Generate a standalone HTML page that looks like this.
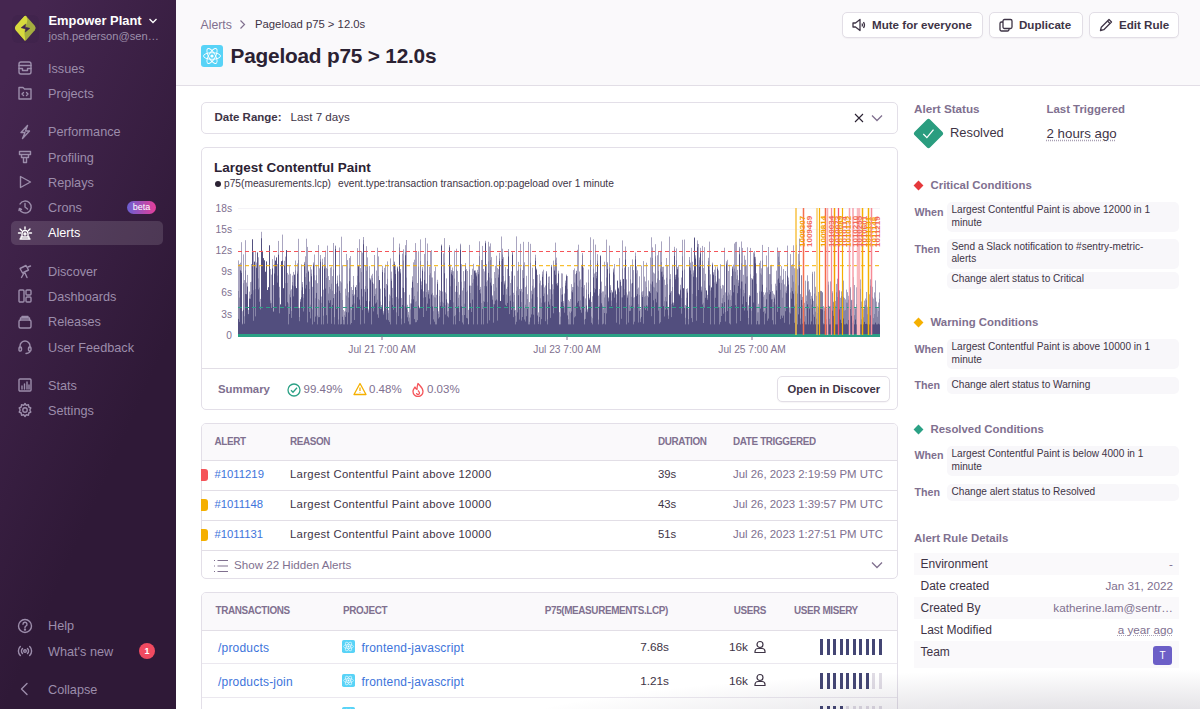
<!DOCTYPE html>
<html><head><meta charset="utf-8"><style>
html,body{margin:0;padding:0}
body{width:1200px;height:709px;overflow:hidden;position:relative;background:#fff;font-family:'Liberation Sans', sans-serif}
.abs{position:absolute}
.t{position:absolute;white-space:nowrap}
#sb{position:absolute;left:0;top:0;width:176px;height:709px;background:linear-gradient(294deg,#2f1937 35%,#452650 92%)}
.card{border:1px solid #e3dfe8;border-radius:5px;background:#fff}
.btn{box-sizing:border-box;border:1px solid #e2dee6;border-radius:5px;background:#fff;box-shadow:0 1px 1px rgba(43,34,51,0.04)}
</style></head><body>
<div id="sb"></div>
<svg class="abs" style="left:10px;top:12px" width="32" height="32" viewBox="10 12 32 32">
<rect x="12" y="15" width="27" height="28" rx="6" fill="#2c1836" opacity="0.12"/>
<path d="M24.3 16.2 Q25.3 15.2 26.3 16.2 L34.8 25.8 Q36.6 28 34.8 30.2 L26.3 39.9 Q25.3 41 24.3 39.9 L15.8 30.2 Q14 28 15.8 25.8 Z" fill="#a4ad3f"/>
<path d="M24.3 16.2 Q25.3 15.2 26.3 16.2 Q27.6 18.5 27.2 21 Q26.6 24 25.5 26 L24.5 31 Q24.3 34 24.9 37 L25.3 41 Q24.8 40.6 24.3 39.9 L15.8 30.2 Q14 28 15.8 25.8 Z" fill="#d8da3e"/>
<path d="M21.2 27.7 L25.6 24.2 L25.1 27.2 L29.8 28.3 L25.3 32 L25.8 28.9 Z" fill="#3f2550" stroke="#3f2550" stroke-width="0.6" stroke-linejoin="round"/>
</svg>
<div class="t" style="left:48.5px;top:15.08px;font-size:12.9px;line-height:12.9px;color:#ffffff;font-weight:700;">Empower Plant</div>
<svg class="abs" style="left:147px;top:16px" width="12" height="9" viewBox="0 0 12 9"><path d="M2.5 3 L6 6.5 L9.5 3" stroke="#fff" stroke-width="1.3" fill="none"/></svg>
<div class="t" style="left:48.5px;top:30.56px;font-size:11.15px;line-height:11.15px;color:#9d90ab;font-weight:400;">josh.pederson@sen…</div>
<div class="abs" style="left:10.5px;top:221px;width:152px;height:24px;border-radius:5px;background:rgba(255,255,255,0.13)"></div>
<svg class="abs" style="left:17px;top:60px" width="16" height="16" viewBox="0 0 16 16" fill="none" stroke="#9c8dab" stroke-width="1.4" stroke-linecap="round" stroke-linejoin="round"><rect x="2" y="2" width="12" height="12" rx="2"/><path d="M2 5.5h12M2 8.5h3.5v2h5v-2H14"/></svg>
<div class="t" style="left:48px;top:62.75px;font-size:12.7px;line-height:12.7px;color:#9c8dab;font-weight:400;">Issues</div>
<svg class="abs" style="left:17px;top:85px" width="16" height="16" viewBox="0 0 16 16" fill="none" stroke="#9c8dab" stroke-width="1.4" stroke-linecap="round" stroke-linejoin="round"><path d="M2 2.5h4l1.5 1.5H14v10H2z"/><path d="M6.5 7.5 5 9l1.5 1.5M9.5 7.5 11 9l-1.5 1.5"/></svg>
<div class="t" style="left:48px;top:87.75px;font-size:12.7px;line-height:12.7px;color:#9c8dab;font-weight:400;">Projects</div>
<svg class="abs" style="left:17px;top:123.5px" width="16" height="16" viewBox="0 0 16 16" fill="none" stroke="#9c8dab" stroke-width="1.4" stroke-linecap="round" stroke-linejoin="round"><path d="M10.5 1.5 4 8.5h4l-2.5 6 7-7.5H8.5z"/></svg>
<div class="t" style="left:48px;top:126.25px;font-size:12.7px;line-height:12.7px;color:#9c8dab;font-weight:400;">Performance</div>
<svg class="abs" style="left:17px;top:149px" width="16" height="16" viewBox="0 0 16 16" fill="none" stroke="#9c8dab" stroke-width="1.4" stroke-linecap="round" stroke-linejoin="round"><path d="M2.5 2.5h11v3h-11zM4.5 5.5h7v3h-7zM6.5 8.5h3v5h-3z"/></svg>
<div class="t" style="left:48px;top:151.75px;font-size:12.7px;line-height:12.7px;color:#9c8dab;font-weight:400;">Profiling</div>
<svg class="abs" style="left:17px;top:174px" width="16" height="16" viewBox="0 0 16 16" fill="none" stroke="#9c8dab" stroke-width="1.4" stroke-linecap="round" stroke-linejoin="round"><path d="M3.5 2.5v11l10-5.5z"/></svg>
<div class="t" style="left:48px;top:176.75px;font-size:12.7px;line-height:12.7px;color:#9c8dab;font-weight:400;">Replays</div>
<svg class="abs" style="left:17px;top:199px" width="16" height="16" viewBox="0 0 16 16" fill="none" stroke="#9c8dab" stroke-width="1.4" stroke-linecap="round" stroke-linejoin="round"><path d="M3 5A6 6 0 1 1 2.5 10"/><path d="M8 4.5V8l2.5 2"/><path d="M2 11.5 2.5 9.5 4.5 10.5"/></svg>
<div class="t" style="left:48px;top:201.75px;font-size:12.7px;line-height:12.7px;color:#9c8dab;font-weight:400;">Crons</div>
<svg class="abs" style="left:17px;top:224.5px" width="16" height="16" viewBox="0 0 16 16" fill="none" stroke="#ffffff" stroke-width="1.4" stroke-linecap="round" stroke-linejoin="round"><path d="M3 14h10M4 14v-2h8v2M5 12V8.5a3 3 0 0 1 6 0V12"/><path d="M8 2v2M3 4l1.5 1.5M13 4l-1.5 1.5M1.5 8h2M12.5 8h2"/><circle cx="8" cy="9" r="1"/></svg>
<div class="t" style="left:48px;top:227.25px;font-size:12.7px;line-height:12.7px;color:#ffffff;font-weight:400;">Alerts</div>
<svg class="abs" style="left:17px;top:263px" width="16" height="16" viewBox="0 0 16 16" fill="none" stroke="#9c8dab" stroke-width="1.4" stroke-linecap="round" stroke-linejoin="round"><path d="M3 5.5l6-3 2.5 4.5-6 3z"/><path d="M7 10l-2.5 4.5M8 10l2 4.5M11 4l2.5-1"/></svg>
<div class="t" style="left:48px;top:265.75px;font-size:12.7px;line-height:12.7px;color:#9c8dab;font-weight:400;">Discover</div>
<svg class="abs" style="left:17px;top:288px" width="16" height="16" viewBox="0 0 16 16" fill="none" stroke="#9c8dab" stroke-width="1.4" stroke-linecap="round" stroke-linejoin="round"><rect x="2" y="2" width="5" height="12" rx="1"/><rect x="9" y="2" width="5" height="5" rx="1"/><rect x="9" y="9" width="5" height="5" rx="1"/></svg>
<div class="t" style="left:48px;top:290.75px;font-size:12.7px;line-height:12.7px;color:#9c8dab;font-weight:400;">Dashboards</div>
<svg class="abs" style="left:17px;top:313.5px" width="16" height="16" viewBox="0 0 16 16" fill="none" stroke="#9c8dab" stroke-width="1.4" stroke-linecap="round" stroke-linejoin="round"><rect x="2" y="6" width="12" height="8" rx="1.5"/><path d="M3.5 6V4h9v2M5 4V2.5h6V4"/></svg>
<div class="t" style="left:48px;top:316.25px;font-size:12.7px;line-height:12.7px;color:#9c8dab;font-weight:400;">Releases</div>
<svg class="abs" style="left:17px;top:339px" width="16" height="16" viewBox="0 0 16 16" fill="none" stroke="#9c8dab" stroke-width="1.4" stroke-linecap="round" stroke-linejoin="round"><path d="M3 9V7a5 5 0 0 1 10 0v2"/><rect x="2" y="8" width="2.5" height="4" rx="1"/><rect x="11.5" y="8" width="2.5" height="4" rx="1"/><path d="M13 12q0 2-4 2.5"/></svg>
<div class="t" style="left:48px;top:341.75px;font-size:12.7px;line-height:12.7px;color:#9c8dab;font-weight:400;">User Feedback</div>
<svg class="abs" style="left:17px;top:377px" width="16" height="16" viewBox="0 0 16 16" fill="none" stroke="#9c8dab" stroke-width="1.4" stroke-linecap="round" stroke-linejoin="round"><rect x="2" y="2" width="12" height="12" rx="1"/><path d="M5 12V9M7.5 12V7M10 12V5M12 12V8"/></svg>
<div class="t" style="left:48px;top:379.75px;font-size:12.7px;line-height:12.7px;color:#9c8dab;font-weight:400;">Stats</div>
<svg class="abs" style="left:17px;top:402px" width="16" height="16" viewBox="0 0 16 16" fill="none" stroke="#9c8dab" stroke-width="1.4" stroke-linecap="round" stroke-linejoin="round"><circle cx="8" cy="8" r="2.2"/><path d="M8 1.5l1.3 1.8 2.2-.5.3 2.2 2 1-1 2 1 2-2 1-.3 2.2-2.2-.5L8 14.5l-1.3-1.8-2.2.5-.3-2.2-2-1 1-2-1-2 2-1 .3-2.2 2.2.5z"/></svg>
<div class="t" style="left:48px;top:404.75px;font-size:12.7px;line-height:12.7px;color:#9c8dab;font-weight:400;">Settings</div>
<svg class="abs" style="left:17px;top:617.5px" width="16" height="16" viewBox="0 0 16 16" fill="none" stroke="#9c8dab" stroke-width="1.4" stroke-linecap="round" stroke-linejoin="round"><circle cx="8" cy="8" r="6.5"/><path d="M6 6.3a2 2 0 1 1 2.8 1.8c-.6.3-.8.7-.8 1.3v.4"/><circle cx="8" cy="11.6" r=".5"/></svg>
<div class="t" style="left:48px;top:620.25px;font-size:12.7px;line-height:12.7px;color:#9c8dab;font-weight:400;">Help</div>
<svg class="abs" style="left:17px;top:643px" width="16" height="16" viewBox="0 0 16 16" fill="none" stroke="#9c8dab" stroke-width="1.4" stroke-linecap="round" stroke-linejoin="round"><circle cx="8" cy="8" r="1.3"/><path d="M5.5 5.5a3.5 3.5 0 0 0 0 5M10.5 5.5a3.5 3.5 0 0 1 0 5M3.3 3.5a6.3 6.3 0 0 0 0 9M12.7 3.5a6.3 6.3 0 0 1 0 9"/></svg>
<div class="t" style="left:48px;top:645.75px;font-size:12.7px;line-height:12.7px;color:#9c8dab;font-weight:400;">What's new</div>
<svg class="abs" style="left:17px;top:681px" width="16" height="16" viewBox="0 0 16 16" fill="none" stroke="#9c8dab" stroke-width="1.4" stroke-linecap="round" stroke-linejoin="round"><path d="M10 2.5 4.5 8l5.5 5.5"/></svg>
<div class="t" style="left:48px;top:683.75px;font-size:12.7px;line-height:12.7px;color:#9c8dab;font-weight:400;">Collapse</div>
<div class="abs" style="left:127px;top:201px;width:29px;height:13px;border-radius:7px;background:linear-gradient(90deg,#6a5fd2,#e63e9a);color:#fff;font:9px/13px 'Liberation Sans', sans-serif;text-align:center">beta</div>
<div class="abs" style="left:139px;top:643px;width:16px;height:16px;border-radius:8px;background:#f04a60;color:#fff;font:bold 9px/16px 'Liberation Sans', sans-serif;text-align:center">1</div>
<div class="abs" style="left:176px;top:0;width:1024px;height:85px;background:#faf9fb;border-bottom:1px solid #e2dee6"></div>
<div class="t" style="left:200.5px;top:18.59px;font-size:12.3px;line-height:12.3px;color:#80708f;font-weight:400;">Alerts</div>
<svg class="abs" style="left:238px;top:19px" width="9" height="11" viewBox="0 0 9 11"><path d="M2.5 1.5 6.5 5.5 2.5 9.5" stroke="#80708f" stroke-width="1.2" fill="none"/></svg>
<div class="t" style="left:255px;top:19.43px;font-size:11.3px;line-height:11.3px;color:#3e3446;font-weight:400;">Pageload p75 &gt; 12.0s</div>
<svg class="abs" style="left:201px;top:45px" width="22" height="22" viewBox="0 0 22 22"><rect width="22" height="22" rx="3" fill="#58d3f7"/>
<g fill="none" stroke="#fff" stroke-width="0.9"><ellipse cx="11" cy="11" rx="8.5" ry="3.3"/><ellipse cx="11" cy="11" rx="8.5" ry="3.3" transform="rotate(60 11 11)"/><ellipse cx="11" cy="11" rx="8.5" ry="3.3" transform="rotate(120 11 11)"/></g><circle cx="11" cy="11" r="1.6" fill="#fff"/></svg>
<div class="t" style="left:230.5px;top:45.59px;font-size:20.8px;line-height:20.8px;color:#2b2233;font-weight:700;letter-spacing:-0.2px">Pageload p75 &gt; 12.0s</div>
<div class="abs btn" style="left:842px;top:12px;width:141px;height:26px"></div><svg class="abs" style="left:851px;top:17px" width="16" height="16" viewBox="0 0 16 16" fill="none" stroke="#3e3446" stroke-width="1.3" stroke-linejoin="round"><path d="M2 6h2.5L9 2.5v11L4.5 10H2z"/><path d="M11 6.5q1 1.5 0 3M12.5 5q2 3 0 6"/></svg><div class="t" style="left:872px;top:19.18px;font-size:11.6px;line-height:11.6px;color:#3e3446;font-weight:700;">Mute for everyone</div>
<div class="abs btn" style="left:989px;top:12px;width:94px;height:26px"></div><svg class="abs" style="left:998px;top:17px" width="16" height="16" viewBox="0 0 16 16" fill="none" stroke="#3e3446" stroke-width="1.3" stroke-linejoin="round"><rect x="5" y="2.5" width="9" height="9" rx="1.5"/><path d="M5 5H3.5A1.5 1.5 0 0 0 2 6.5v6A1.5 1.5 0 0 0 3.5 14h6a1.5 1.5 0 0 0 1.5-1.5V11"/></svg><div class="t" style="left:1019px;top:19.18px;font-size:11.6px;line-height:11.6px;color:#3e3446;font-weight:700;">Duplicate</div>
<div class="abs btn" style="left:1089px;top:12px;width:90px;height:26px"></div><svg class="abs" style="left:1098px;top:17px" width="16" height="16" viewBox="0 0 16 16" fill="none" stroke="#3e3446" stroke-width="1.3" stroke-linejoin="round"><path d="M2.5 13.5l.8-3.3L11 2.5l2.5 2.5-7.7 7.7z"/><path d="M9.5 4l2.5 2.5"/></svg><div class="t" style="left:1119px;top:19.18px;font-size:11.6px;line-height:11.6px;color:#3e3446;font-weight:700;">Edit Rule</div>
<div class="abs card" style="left:201px;top:102px;width:695px;height:30px"></div>
<div class="t" style="left:214.5px;top:111.57px;font-size:11.5px;line-height:11.5px;color:#3e3446;font-weight:700;">Date Range:</div>
<div class="t" style="left:290.5px;top:111.48px;font-size:11.6px;line-height:11.6px;color:#3e3446;font-weight:400;">Last 7 days</div>
<svg class="abs" style="left:853px;top:112px" width="12" height="12" viewBox="0 0 12 12"><path d="M2 2l8 8M10 2l-8 8" stroke="#2b2233" stroke-width="1.1"/></svg>
<svg class="abs" style="left:870px;top:112px" width="14" height="12" viewBox="0 0 14 12"><path d="M2 3.5l5 5 5-5" stroke="#80708f" stroke-width="1.3" fill="none"/></svg>
<div class="abs card" style="left:201px;top:147px;width:695px;height:261px"></div>
<div class="abs" style="left:202px;top:368px;width:695px;height:1px;background:#e2dee6"></div>
<div class="t" style="left:214px;top:161.07px;font-size:13.5px;line-height:13.5px;color:#2b2233;font-weight:700;">Largest Contentful Paint</div>
<div class="abs" style="left:214.5px;top:181px;width:6px;height:6px;border-radius:3px;background:#2b2233"></div>
<div class="t" style="left:224px;top:178.87px;font-size:10.2px;line-height:10.2px;color:#3e3446;font-weight:400;">p75(measurements.lcp)</div>
<div class="t" style="left:338px;top:178.87px;font-size:10.2px;line-height:10.2px;color:#3e3446;font-weight:400;">event.type:transaction transaction.op:pageload over 1 minute</div>
<div class="t" style="left:196px;width:36px;text-align:right;top:202.5px;font-size:10.2px;line-height:12px;color:#80708f">18s</div>
<div class="t" style="left:196px;width:36px;text-align:right;top:223.7px;font-size:10.2px;line-height:12px;color:#80708f">15s</div>
<div class="t" style="left:196px;width:36px;text-align:right;top:245px;font-size:10.2px;line-height:12px;color:#80708f">12s</div>
<div class="t" style="left:196px;width:36px;text-align:right;top:266.2px;font-size:10.2px;line-height:12px;color:#80708f">9s</div>
<div class="t" style="left:196px;width:36px;text-align:right;top:287.4px;font-size:10.2px;line-height:12px;color:#80708f">6s</div>
<div class="t" style="left:196px;width:36px;text-align:right;top:308.6px;font-size:10.2px;line-height:12px;color:#80708f">3s</div>
<div class="t" style="left:196px;width:36px;text-align:right;top:329.8px;font-size:10.2px;line-height:12px;color:#80708f">0</div>
<div class="t" style="left:332px;width:100px;text-align:center;top:344px;font-size:10.2px;line-height:12px;color:#80708f">Jul 21 7:00 AM</div>
<div class="t" style="left:517px;width:100px;text-align:center;top:344px;font-size:10.2px;line-height:12px;color:#80708f">Jul 23 7:00 AM</div>
<div class="t" style="left:702px;width:100px;text-align:center;top:344px;font-size:10.2px;line-height:12px;color:#80708f">Jul 25 7:00 AM</div>
<svg class="abs" style="left:0;top:0" width="1200" height="709">
<line x1="238" y1="208.5" x2="880" y2="208.5" stroke="#f4f3f7" stroke-width="1"/>
<line x1="238" y1="229.5" x2="880" y2="229.5" stroke="#f4f3f7" stroke-width="1"/>
<path d="M238.5 260.4V335.0M239.5 264.0V335.0M240.5 262.7V335.0M241.5 242.2V335.0M242.5 311.2V335.0M243.5 254.4V335.0M244.5 280.1V335.0M245.5 240.2V335.0M246.5 282.6V335.0M247.5 274.9V335.0M248.5 309.8V335.0M249.5 291.6V335.0M250.5 282.1V335.0M251.5 264.0V335.0M252.5 239.4V335.0M253.5 251.4V335.0M254.5 261.7V335.0M255.5 251.2V335.0M256.5 262.5V335.0M257.5 252.5V335.0M258.5 257.3V335.0M259.5 266.0V335.0M260.5 298.9V335.0M261.5 231.8V335.0M262.5 250.9V335.0M263.5 258.2V335.0M264.5 260.4V335.0M265.5 271.8V335.0M266.5 261.5V335.0M267.5 290.0V335.0M268.5 287.4V335.0M269.5 245.4V335.0M270.5 269.0V335.0M271.5 274.6V335.0M272.5 259.1V335.0M273.5 285.1V335.0M274.5 255.5V335.0M275.5 260.7V335.0M276.5 257.5V335.0M277.5 264.0V335.0M278.5 240.9V335.0M279.5 286.8V335.0M280.5 304.5V335.0M281.5 261.3V335.0M282.5 234.6V335.0M283.5 288.4V335.0M284.5 260.8V335.0M285.5 256.6V335.0M286.5 250.2V335.0M287.5 272.9V335.0M288.5 274.6V335.0M289.5 266.0V335.0M290.5 273.8V335.0M291.5 289.3V335.0M292.5 275.5V335.0M293.5 271.9V335.0M294.5 274.6V335.0M295.5 260.5V335.0M296.5 288.2V335.0M297.5 263.4V335.0M298.5 238.8V335.0M299.5 307.9V335.0M300.5 299.0V335.0M301.5 264.4V335.0M302.5 282.0V335.0M303.5 294.0V335.0M304.5 261.9V335.0M305.5 256.3V335.0M306.5 238.7V335.0M307.5 246.9V335.0M308.5 270.5V335.0M309.5 281.6V335.0M310.5 266.7V335.0M311.5 269.5V335.0M312.5 286.8V335.0M313.5 262.4V335.0M314.5 254.5V335.0M315.5 280.3V335.0M316.5 264.8V335.0M317.5 283.2V335.0M318.5 245.1V335.0M319.5 268.3V335.0M320.5 255.0V335.0M321.5 296.5V335.0M322.5 258.7V335.0M323.5 289.7V335.0M324.5 257.1V335.0M325.5 250.6V335.0M326.5 268.1V335.0M327.5 245.6V335.0M328.5 276.1V335.0M329.5 280.0V335.0M330.5 267.6V335.0M331.5 266.6V335.0M332.5 276.1V335.0M333.5 243.0V335.0M334.5 294.0V335.0M335.5 245.5V335.0M336.5 283.9V335.0M337.5 275.6V335.0M338.5 286.4V335.0M339.5 247.5V335.0M340.5 281.3V335.0M341.5 236.7V335.0M342.5 265.2V335.0M343.5 310.0V335.0M344.5 311.4V335.0M345.5 288.7V335.0M346.5 253.9V335.0M347.5 260.1V335.0M348.5 292.2V335.0M349.5 258.1V335.0M350.5 256.1V335.0M351.5 287.0V335.0M352.5 290.0V335.0M353.5 276.0V335.0M354.5 294.5V335.0M355.5 286.9V335.0M356.5 285.1V335.0M357.5 248.1V335.0M358.5 265.6V335.0M359.5 239.2V335.0M360.5 268.1V335.0M361.5 251.1V335.0M362.5 252.7V335.0M363.5 237.0V335.0M364.5 289.2V335.0M365.5 265.7V335.0M366.5 246.2V335.0M367.5 257.4V335.0M368.5 309.4V335.0M369.5 266.1V335.0M370.5 278.5V335.0M371.5 275.5V335.0M372.5 273.8V335.0M373.5 283.7V335.0M374.5 255.0V335.0M375.5 288.6V335.0M376.5 270.5V335.0M377.5 247.7V335.0M378.5 256.4V335.0M379.5 280.0V335.0M380.5 288.7V335.0M381.5 305.0V335.0M382.5 265.8V335.0M383.5 311.2V335.0M384.5 267.9V335.0M385.5 264.7V335.0M386.5 284.0V335.0M387.5 261.4V335.0M388.5 310.1V335.0M389.5 294.5V335.0M390.5 258.4V335.0M391.5 271.6V335.0M392.5 287.9V335.0M393.5 237.4V335.0M394.5 261.5V335.0M395.5 266.0V335.0M396.5 296.9V335.0M397.5 266.5V335.0M398.5 271.4V335.0M399.5 243.6V335.0M400.5 269.0V335.0M401.5 298.1V335.0M402.5 253.6V335.0M403.5 249.3V335.0M404.5 292.2V335.0M405.5 245.2V335.0M406.5 240.0V335.0M407.5 304.8V335.0M408.5 311.9V335.0M409.5 294.8V335.0M410.5 303.4V335.0M411.5 287.8V335.0M412.5 276.3V335.0M413.5 262.3V335.0M414.5 259.7V335.0M415.5 243.1V335.0M416.5 251.8V335.0M417.5 283.0V335.0M418.5 251.2V335.0M419.5 307.3V335.0M420.5 239.4V335.0M421.5 281.4V335.0M422.5 267.1V335.0M423.5 291.4V335.0M424.5 253.9V335.0M425.5 237.9V335.0M426.5 283.7V335.0M427.5 243.5V335.0M428.5 290.2V335.0M429.5 266.9V335.0M430.5 251.4V335.0M431.5 250.1V335.0M432.5 277.5V335.0M433.5 295.3V335.0M434.5 271.2V335.0M435.5 266.7V335.0M436.5 294.8V335.0M437.5 279.8V335.0M438.5 311.3V335.0M439.5 289.9V335.0M440.5 290.8V335.0M441.5 244.5V335.0M442.5 291.5V335.0M443.5 253.4V335.0M444.5 238.1V335.0M445.5 292.4V335.0M446.5 278.4V335.0M447.5 302.6V335.0M448.5 303.5V335.0M449.5 245.0V335.0M450.5 264.7V335.0M451.5 270.1V335.0M452.5 267.5V335.0M453.5 271.2V335.0M454.5 250.6V335.0M455.5 291.8V335.0M456.5 248.7V335.0M457.5 270.9V335.0M458.5 281.9V335.0M459.5 294.7V335.0M460.5 243.7V335.0M461.5 264.2V335.0M462.5 290.5V335.0M463.5 271.1V335.0M464.5 281.2V335.0M465.5 263.1V335.0M466.5 269.1V335.0M467.5 270.9V335.0M468.5 309.9V335.0M469.5 244.9V335.0M470.5 285.6V335.0M471.5 274.9V335.0M472.5 268.7V335.0M473.5 263.8V335.0M474.5 270.3V335.0M475.5 270.3V335.0M476.5 272.6V335.0M477.5 269.9V335.0M478.5 266.0V335.0M479.5 241.3V335.0M480.5 286.9V335.0M481.5 260.0V335.0M482.5 245.9V335.0M483.5 268.9V335.0M484.5 271.4V335.0M485.5 240.8V335.0M486.5 264.1V335.0M487.5 280.4V335.0M488.5 241.8V335.0M489.5 246.5V335.0M490.5 243.4V335.0M491.5 257.1V335.0M492.5 295.3V335.0M493.5 284.0V335.0M494.5 272.0V335.0M495.5 265.8V335.0M496.5 255.7V335.0M497.5 267.9V335.0M498.5 269.2V335.0M499.5 252.8V335.0M500.5 300.9V335.0M501.5 236.5V335.0M502.5 248.7V335.0M503.5 257.2V335.0M504.5 281.3V335.0M505.5 267.1V335.0M506.5 288.8V335.0M507.5 268.9V335.0M508.5 249.0V335.0M509.5 276.0V335.0M510.5 283.0V335.0M511.5 271.3V335.0M512.5 252.0V335.0M513.5 292.8V335.0M514.5 275.7V335.0M515.5 310.0V335.0M516.5 236.4V335.0M517.5 270.8V335.0M518.5 261.9V335.0M519.5 289.1V335.0M520.5 243.8V335.0M521.5 288.9V335.0M522.5 270.1V335.0M523.5 241.8V335.0M524.5 262.3V335.0M525.5 287.1V335.0M526.5 275.8V335.0M527.5 294.2V335.0M528.5 241.9V335.0M529.5 302.1V335.0M530.5 243.8V335.0M531.5 290.7V335.0M532.5 267.6V335.0M533.5 279.1V335.0M534.5 287.6V335.0M535.5 254.7V335.0M536.5 268.6V335.0M537.5 274.9V335.0M538.5 312.4V335.0M539.5 274.3V335.0M540.5 280.6V335.0M541.5 285.3V335.0M542.5 271.5V335.0M543.5 269.7V335.0M544.5 287.4V335.0M545.5 285.5V335.0M546.5 271.1V335.0M547.5 294.5V335.0M548.5 276.7V335.0M549.5 276.4V335.0M550.5 289.3V335.0M551.5 264.9V335.0M552.5 284.3V335.0M553.5 260.6V335.0M554.5 266.3V335.0M555.5 242.6V335.0M556.5 257.6V335.0M557.5 282.9V335.0M558.5 270.7V335.0M559.5 312.2V335.0M560.5 288.3V335.0M561.5 273.3V335.0M562.5 273.5V335.0M563.5 301.1V335.0M564.5 293.5V335.0M565.5 280.6V335.0M566.5 274.5V335.0M567.5 276.0V335.0M568.5 299.9V335.0M569.5 301.3V335.0M570.5 299.0V335.0M571.5 284.1V335.0M572.5 287.0V335.0M573.5 270.1V335.0M574.5 268.4V335.0M575.5 274.2V335.0M576.5 270.7V335.0M577.5 249.8V335.0M578.5 244.7V335.0M579.5 271.5V335.0M580.5 279.4V335.0M581.5 264.9V335.0M582.5 253.0V335.0M583.5 267.5V335.0M584.5 285.1V335.0M585.5 298.4V335.0M586.5 282.5V335.0M587.5 309.3V335.0M588.5 269.5V335.0M589.5 297.7V335.0M590.5 237.3V335.0M591.5 301.9V335.0M592.5 296.2V335.0M593.5 239.3V335.0M594.5 273.5V335.0M595.5 244.6V335.0M596.5 271.9V335.0M597.5 254.2V335.0M598.5 295.7V335.0M599.5 289.0V335.0M600.5 255.4V335.0M601.5 281.6V335.0M602.5 291.5V335.0M603.5 291.4V335.0M604.5 261.7V335.0M605.5 285.9V335.0M606.5 239.6V335.0M607.5 262.2V335.0M608.5 297.4V335.0M609.5 245.6V335.0M610.5 285.2V335.0M611.5 290.1V335.0M612.5 291.7V335.0M613.5 268.5V335.0M614.5 264.0V335.0M615.5 289.6V335.0M616.5 294.3V335.0M617.5 280.4V335.0M618.5 287.6V335.0M619.5 258.1V335.0M620.5 279.6V335.0M621.5 285.8V335.0M622.5 240.4V335.0M623.5 278.9V335.0M624.5 267.6V335.0M625.5 246.5V335.0M626.5 279.4V335.0M627.5 294.6V335.0M628.5 267.0V335.0M629.5 291.4V335.0M630.5 266.2V335.0M631.5 283.5V335.0M632.5 259.4V335.0M633.5 270.1V335.0M634.5 297.2V335.0M635.5 252.5V335.0M636.5 266.3V335.0M637.5 270.3V335.0M638.5 287.6V335.0M639.5 276.3V335.0M640.5 308.7V335.0M641.5 265.6V335.0M642.5 291.3V335.0M643.5 261.1V335.0M644.5 276.6V335.0M645.5 281.4V335.0M646.5 262.7V335.0M647.5 295.7V335.0M648.5 280.4V335.0M649.5 291.0V335.0M650.5 257.5V335.0M651.5 237.3V335.0M652.5 247.4V335.0M653.5 272.5V335.0M654.5 273.5V335.0M655.5 244.2V335.0M656.5 282.7V335.0M657.5 255.3V335.0M658.5 251.6V335.0M659.5 280.1V335.0M660.5 250.9V335.0M661.5 241.4V335.0M662.5 267.0V335.0M663.5 266.7V335.0M664.5 279.6V335.0M665.5 284.9V335.0M666.5 258.0V335.0M667.5 265.3V335.0M668.5 307.7V335.0M669.5 236.6V335.0M670.5 274.1V335.0M671.5 291.1V335.0M672.5 264.8V335.0M673.5 302.5V335.0M674.5 246.8V335.0M675.5 274.8V335.0M676.5 248.4V335.0M677.5 267.0V335.0M678.5 265.2V335.0M679.5 294.1V335.0M680.5 284.8V335.0M681.5 277.5V335.0M682.5 239.8V335.0M683.5 288.1V335.0M684.5 239.5V335.0M685.5 305.0V335.0M686.5 289.0V335.0M687.5 288.3V335.0M688.5 308.6V335.0M689.5 257.0V335.0M690.5 262.6V335.0M691.5 247.8V335.0M692.5 261.7V335.0M693.5 270.4V335.0M694.5 237.4V335.0M695.5 255.3V335.0M696.5 277.3V335.0M697.5 240.4V335.0M698.5 244.0V335.0M699.5 257.5V335.0M700.5 247.8V335.0M701.5 286.6V335.0M702.5 245.9V335.0M703.5 267.9V335.0M704.5 247.2V335.0M705.5 273.8V335.0M706.5 290.3V335.0M707.5 294.8V335.0M708.5 257.8V335.0M709.5 241.6V335.0M710.5 274.3V335.0M711.5 286.9V335.0M712.5 262.6V335.0M713.5 272.2V335.0M714.5 269.7V335.0M715.5 266.4V335.0M716.5 281.6V335.0M717.5 266.5V335.0M718.5 270.4V335.0M719.5 278.7V335.0M720.5 264.2V335.0M721.5 288.5V335.0M722.5 284.9V335.0M723.5 285.4V335.0M724.5 247.7V335.0M725.5 292.4V335.0M726.5 261.3V335.0M727.5 259.8V335.0M728.5 270.9V335.0M729.5 264.8V335.0M730.5 290.0V335.0M731.5 276.1V335.0M732.5 266.4V335.0M733.5 264.7V335.0M734.5 243.5V335.0M735.5 242.1V335.0M736.5 241.8V335.0M737.5 269.9V335.0M738.5 280.1V335.0M739.5 246.9V335.0M740.5 269.9V335.0M741.5 241.5V335.0M742.5 247.9V335.0M743.5 274.8V335.0M744.5 255.6V335.0M745.5 259.8V335.0M746.5 265.0V335.0M747.5 247.3V335.0M748.5 305.3V335.0M749.5 295.2V335.0M750.5 247.9V335.0M751.5 278.1V335.0M752.5 278.6V335.0M753.5 252.5V335.0M754.5 251.0V335.0M755.5 256.8V335.0M756.5 273.3V335.0M757.5 292.8V335.0M758.5 303.8V335.0M759.5 262.9V335.0M760.5 260.7V335.0M761.5 268.3V335.0M762.5 244.9V335.0M763.5 292.2V335.0M764.5 294.7V335.0M765.5 292.5V335.0M766.5 255.5V335.0M767.5 267.4V335.0M768.5 247.0V335.0M769.5 274.1V335.0M770.5 265.9V335.0M771.5 264.8V335.0M772.5 291.0V335.0M773.5 293.6V335.0M774.5 294.7V335.0M775.5 283.7V335.0M776.5 270.6V335.0M777.5 247.5V335.0M778.5 251.1V335.0M779.5 251.4V335.0M780.5 275.8V335.0M781.5 266.2V335.0M782.5 279.8V335.0M783.5 269.1V335.0M784.5 284.4V335.0M785.5 271.0V335.0M786.5 286.4V335.0M787.5 245.6V335.0M788.5 277.5V335.0M789.5 307.4V335.0M790.5 254.1V335.0M791.5 265.5V335.0M792.5 264.2V335.0M793.5 245.3V335.0M794.5 268.2V335.0M795.5 268.2V335.0M796.5 244.8V335.0M797.5 269.2V335.0M798.5 253.8V335.0M799.5 238.5V335.0M800.5 294.1V335.0M801.5 275.0V335.0M802.5 296.9V335.0M803.5 275.6V335.0M804.5 302.8V335.0M805.5 280.7V335.0M806.5 295.5V335.0M807.5 275.3V335.0M808.5 281.2V335.0M809.5 289.5V335.0M810.5 292.3V335.0M811.5 295.9V335.0M812.5 271.8V335.0M813.5 300.8V335.0M814.5 271.5V335.0M815.5 286.8V335.0M816.5 295.8V335.0M817.5 306.0V335.0M818.5 292.0V335.0M819.5 305.9V335.0M820.5 290.7V335.0M821.5 291.1V335.0M822.5 292.4V335.0M823.5 306.1V335.0M824.5 307.4V335.0M825.5 288.7V335.0M826.5 308.5V335.0M827.5 292.5V335.0M828.5 281.6V335.0M829.5 306.2V335.0M830.5 281.4V335.0M831.5 310.7V335.0M832.5 291.3V335.0M833.5 301.7V335.0M834.5 297.8V335.0M835.5 300.9V335.0M836.5 283.9V335.0M837.5 278.7V335.0M838.5 287.3V335.0M839.5 290.2V335.0M840.5 297.8V335.0M841.5 291.4V335.0M842.5 278.2V335.0M843.5 280.6V335.0M844.5 297.9V335.0M845.5 299.3V335.0M846.5 289.6V335.0M847.5 292.2V335.0M848.5 295.8V335.0M849.5 284.0V335.0M850.5 287.1V335.0M851.5 299.8V335.0M852.5 299.9V335.0M853.5 277.1V335.0M854.5 285.0V335.0M855.5 308.1V335.0M856.5 287.3V335.0M857.5 305.1V335.0M858.5 291.9V335.0M859.5 283.4V335.0M860.5 279.4V335.0M861.5 301.5V335.0M862.5 301.3V335.0M863.5 308.8V335.0M864.5 300.6V335.0M865.5 298.5V335.0M866.5 292.0V335.0M867.5 306.8V335.0M868.5 290.9V335.0M869.5 294.3V335.0M870.5 279.3V335.0M871.5 285.1V335.0M872.5 286.8V335.0M873.5 298.6V335.0M874.5 292.4V335.0M875.5 280.4V335.0M876.5 301.6V335.0M877.5 308.2V335.0M878.5 302.5V335.0M879.5 292.4V335.0" stroke="#a9a5c0" stroke-width="1"/>
<path d="M238.5 291.0V335.0M239.5 297.6V335.0M240.5 283.9V335.0M241.5 271.1V335.0M242.5 323.5V335.0M243.5 283.2V335.0M244.5 316.3V335.0M245.5 270.4V335.0M246.5 299.1V335.0M247.5 292.3V335.0M248.5 317.8V335.0M249.5 300.3V335.0M250.5 295.1V335.0M251.5 281.6V335.0M252.5 248.3V335.0M253.5 290.2V335.0M254.5 263.5V335.0M255.5 289.1V335.0M256.5 280.0V335.0M257.5 271.5V335.0M258.5 278.4V335.0M259.5 287.6V335.0M260.5 306.4V335.0M261.5 244.2V335.0M262.5 254.4V335.0M263.5 264.0V335.0M264.5 266.0V335.0M265.5 276.0V335.0M266.5 273.1V335.0M267.5 292.8V335.0M268.5 287.6V335.0M269.5 246.8V335.0M270.5 300.4V335.0M271.5 302.9V335.0M272.5 268.8V335.0M273.5 311.9V335.0M274.5 264.2V335.0M275.5 274.8V335.0M276.5 261.4V335.0M277.5 275.6V335.0M278.5 255.1V335.0M279.5 297.6V335.0M280.5 308.2V335.0M281.5 261.7V335.0M282.5 264.5V335.0M283.5 288.5V335.0M284.5 269.3V335.0M285.5 283.1V335.0M286.5 250.8V335.0M287.5 282.9V335.0M288.5 303.4V335.0M289.5 294.4V335.0M290.5 290.6V335.0M291.5 311.0V335.0M292.5 282.1V335.0M293.5 286.3V335.0M294.5 282.3V335.0M295.5 270.4V335.0M296.5 291.2V335.0M297.5 271.4V335.0M298.5 260.0V335.0M299.5 317.0V335.0M300.5 300.5V335.0M301.5 290.3V335.0M302.5 284.3V335.0M303.5 297.8V335.0M304.5 263.4V335.0M305.5 277.1V335.0M306.5 273.2V335.0M307.5 264.8V335.0M308.5 271.6V335.0M309.5 289.0V335.0M310.5 304.7V335.0M311.5 273.7V335.0M312.5 309.4V335.0M313.5 263.8V335.0M314.5 275.3V335.0M315.5 298.3V335.0M316.5 275.3V335.0M317.5 315.6V335.0M318.5 299.1V335.0M319.5 300.2V335.0M320.5 259.3V335.0M321.5 302.9V335.0M322.5 262.3V335.0M323.5 315.7V335.0M324.5 264.2V335.0M325.5 265.9V335.0M326.5 277.9V335.0M327.5 269.0V335.0M328.5 293.5V335.0M329.5 287.0V335.0M330.5 289.2V335.0M331.5 283.7V335.0M332.5 290.7V335.0M333.5 269.4V335.0M334.5 317.2V335.0M335.5 246.2V335.0M336.5 292.4V335.0M337.5 280.5V335.0M338.5 319.5V335.0M339.5 274.6V335.0M340.5 293.0V335.0M341.5 282.5V335.0M342.5 300.0V335.0M343.5 319.9V335.0M344.5 315.2V335.0M345.5 310.8V335.0M346.5 295.6V335.0M347.5 283.6V335.0M348.5 297.5V335.0M349.5 268.4V335.0M350.5 306.9V335.0M351.5 310.1V335.0M352.5 294.0V335.0M353.5 285.3V335.0M354.5 303.4V335.0M355.5 287.3V335.0M356.5 290.0V335.0M357.5 275.8V335.0M358.5 266.0V335.0M359.5 282.4V335.0M360.5 305.2V335.0M361.5 272.0V335.0M362.5 296.5V335.0M363.5 240.1V335.0M364.5 308.5V335.0M365.5 286.2V335.0M366.5 270.7V335.0M367.5 266.4V335.0M368.5 310.9V335.0M369.5 278.1V335.0M370.5 279.7V335.0M371.5 307.3V335.0M372.5 277.9V335.0M373.5 305.7V335.0M374.5 266.1V335.0M375.5 294.2V335.0M376.5 288.0V335.0M377.5 299.7V335.0M378.5 276.1V335.0M379.5 280.1V335.0M380.5 301.5V335.0M381.5 306.9V335.0M382.5 270.1V335.0M383.5 313.1V335.0M384.5 272.8V335.0M385.5 289.5V335.0M386.5 309.0V335.0M387.5 278.8V335.0M388.5 313.2V335.0M389.5 301.3V335.0M390.5 295.8V335.0M391.5 278.6V335.0M392.5 298.0V335.0M393.5 264.2V335.0M394.5 262.2V335.0M395.5 270.1V335.0M396.5 312.4V335.0M397.5 267.2V335.0M398.5 298.6V335.0M399.5 247.4V335.0M400.5 271.7V335.0M401.5 318.6V335.0M402.5 287.5V335.0M403.5 260.6V335.0M404.5 306.4V335.0M405.5 251.8V335.0M406.5 277.6V335.0M407.5 309.9V335.0M408.5 314.7V335.0M409.5 317.6V335.0M410.5 309.4V335.0M411.5 299.3V335.0M412.5 280.3V335.0M413.5 287.4V335.0M414.5 296.1V335.0M415.5 301.7V335.0M416.5 301.2V335.0M417.5 291.5V335.0M418.5 266.6V335.0M419.5 308.1V335.0M420.5 261.1V335.0M421.5 285.1V335.0M422.5 269.3V335.0M423.5 297.7V335.0M424.5 271.6V335.0M425.5 283.4V335.0M426.5 292.0V335.0M427.5 261.0V335.0M428.5 292.2V335.0M429.5 275.2V335.0M430.5 273.2V335.0M431.5 277.5V335.0M432.5 292.9V335.0M433.5 311.2V335.0M434.5 297.3V335.0M435.5 297.6V335.0M436.5 307.1V335.0M437.5 282.1V335.0M438.5 313.9V335.0M439.5 296.1V335.0M440.5 302.3V335.0M441.5 245.4V335.0M442.5 301.7V335.0M443.5 302.9V335.0M444.5 262.7V335.0M445.5 305.3V335.0M446.5 293.8V335.0M447.5 311.4V335.0M448.5 311.0V335.0M449.5 246.5V335.0M450.5 286.3V335.0M451.5 272.1V335.0M452.5 270.7V335.0M453.5 302.4V335.0M454.5 278.5V335.0M455.5 314.9V335.0M456.5 269.5V335.0M457.5 292.2V335.0M458.5 297.8V335.0M459.5 312.1V335.0M460.5 245.2V335.0M461.5 281.7V335.0M462.5 315.2V335.0M463.5 287.9V335.0M464.5 303.7V335.0M465.5 265.6V335.0M466.5 291.9V335.0M467.5 290.6V335.0M468.5 324.3V335.0M469.5 269.5V335.0M470.5 293.0V335.0M471.5 285.9V335.0M472.5 282.9V335.0M473.5 279.2V335.0M474.5 270.7V335.0M475.5 271.5V335.0M476.5 274.8V335.0M477.5 285.6V335.0M478.5 272.0V335.0M479.5 256.1V335.0M480.5 289.2V335.0M481.5 303.0V335.0M482.5 259.9V335.0M483.5 301.1V335.0M484.5 285.9V335.0M485.5 242.5V335.0M486.5 281.8V335.0M487.5 302.1V335.0M488.5 261.4V335.0M489.5 277.4V335.0M490.5 260.0V335.0M491.5 278.4V335.0M492.5 296.4V335.0M493.5 304.3V335.0M494.5 291.1V335.0M495.5 278.1V335.0M496.5 287.5V335.0M497.5 300.5V335.0M498.5 274.6V335.0M499.5 258.5V335.0M500.5 301.0V335.0M501.5 260.9V335.0M502.5 254.5V335.0M503.5 276.0V335.0M504.5 283.1V335.0M505.5 280.3V335.0M506.5 294.5V335.0M507.5 286.9V335.0M508.5 251.5V335.0M509.5 296.1V335.0M510.5 295.3V335.0M511.5 279.6V335.0M512.5 252.7V335.0M513.5 301.8V335.0M514.5 295.0V335.0M515.5 315.7V335.0M516.5 290.7V335.0M517.5 286.7V335.0M518.5 269.7V335.0M519.5 309.6V335.0M520.5 268.4V335.0M521.5 302.1V335.0M522.5 292.2V335.0M523.5 265.0V335.0M524.5 308.1V335.0M525.5 304.7V335.0M526.5 285.6V335.0M527.5 299.0V335.0M528.5 307.7V335.0M529.5 321.8V335.0M530.5 262.8V335.0M531.5 298.6V335.0M532.5 285.8V335.0M533.5 288.8V335.0M534.5 307.1V335.0M535.5 257.8V335.0M536.5 269.4V335.0M537.5 297.1V335.0M538.5 321.6V335.0M539.5 283.3V335.0M540.5 298.3V335.0M541.5 302.7V335.0M542.5 274.4V335.0M543.5 284.4V335.0M544.5 293.5V335.0M545.5 301.5V335.0M546.5 271.8V335.0M547.5 319.4V335.0M548.5 283.0V335.0M549.5 288.9V335.0M550.5 299.1V335.0M551.5 265.5V335.0M552.5 294.3V335.0M553.5 289.2V335.0M554.5 269.8V335.0M555.5 259.7V335.0M556.5 263.1V335.0M557.5 284.8V335.0M558.5 272.9V335.0M559.5 327.0V335.0M560.5 316.6V335.0M561.5 294.7V335.0M562.5 287.0V335.0M563.5 303.1V335.0M564.5 307.0V335.0M565.5 282.9V335.0M566.5 275.6V335.0M567.5 288.9V335.0M568.5 319.3V335.0M569.5 311.6V335.0M570.5 313.0V335.0M571.5 291.3V335.0M572.5 289.9V335.0M573.5 287.1V335.0M574.5 282.6V335.0M575.5 305.7V335.0M576.5 271.2V335.0M577.5 285.6V335.0M578.5 286.8V335.0M579.5 280.6V335.0M580.5 300.3V335.0M581.5 287.0V335.0M582.5 255.3V335.0M583.5 287.9V335.0M584.5 319.6V335.0M585.5 311.6V335.0M586.5 289.6V335.0M587.5 311.4V335.0M588.5 282.5V335.0M589.5 298.9V335.0M590.5 260.1V335.0M591.5 316.6V335.0M592.5 318.2V335.0M593.5 268.7V335.0M594.5 288.0V335.0M595.5 272.3V335.0M596.5 276.0V335.0M597.5 260.8V335.0M598.5 319.6V335.0M599.5 293.7V335.0M600.5 255.7V335.0M601.5 292.8V335.0M602.5 305.5V335.0M603.5 309.3V335.0M604.5 297.5V335.0M605.5 294.6V335.0M606.5 277.5V335.0M607.5 263.6V335.0M608.5 298.4V335.0M609.5 267.7V335.0M610.5 287.4V335.0M611.5 300.7V335.0M612.5 292.2V335.0M613.5 270.4V335.0M614.5 274.6V335.0M615.5 290.6V335.0M616.5 302.7V335.0M617.5 280.7V335.0M618.5 288.3V335.0M619.5 291.8V335.0M620.5 280.4V335.0M621.5 297.4V335.0M622.5 268.5V335.0M623.5 279.1V335.0M624.5 289.2V335.0M625.5 252.3V335.0M626.5 292.4V335.0M627.5 296.2V335.0M628.5 291.7V335.0M629.5 305.2V335.0M630.5 279.4V335.0M631.5 296.8V335.0M632.5 266.9V335.0M633.5 297.7V335.0M634.5 307.5V335.0M635.5 256.0V335.0M636.5 273.4V335.0M637.5 288.9V335.0M638.5 304.2V335.0M639.5 294.9V335.0M640.5 318.5V335.0M641.5 292.3V335.0M642.5 294.9V335.0M643.5 290.7V335.0M644.5 296.8V335.0M645.5 296.2V335.0M646.5 287.1V335.0M647.5 305.6V335.0M648.5 290.9V335.0M649.5 291.5V335.0M650.5 283.6V335.0M651.5 284.5V335.0M652.5 257.9V335.0M653.5 286.8V335.0M654.5 287.5V335.0M655.5 256.3V335.0M656.5 291.3V335.0M657.5 278.5V335.0M658.5 270.9V335.0M659.5 306.9V335.0M660.5 268.6V335.0M661.5 262.0V335.0M662.5 271.5V335.0M663.5 274.7V335.0M664.5 301.2V335.0M665.5 296.9V335.0M666.5 277.8V335.0M667.5 284.2V335.0M668.5 315.5V335.0M669.5 279.4V335.0M670.5 279.1V335.0M671.5 304.0V335.0M672.5 287.0V335.0M673.5 303.4V335.0M674.5 249.5V335.0M675.5 276.9V335.0M676.5 260.3V335.0M677.5 268.8V335.0M678.5 277.5V335.0M679.5 294.9V335.0M680.5 288.9V335.0M681.5 298.1V335.0M682.5 256.3V335.0M683.5 288.3V335.0M684.5 269.5V335.0M685.5 317.8V335.0M686.5 297.8V335.0M687.5 291.4V335.0M688.5 319.1V335.0M689.5 260.1V335.0M690.5 267.7V335.0M691.5 274.3V335.0M692.5 293.9V335.0M693.5 272.7V335.0M694.5 237.7V335.0M695.5 257.5V335.0M696.5 296.2V335.0M697.5 243.7V335.0M698.5 265.1V335.0M699.5 260.2V335.0M700.5 251.2V335.0M701.5 289.9V335.0M702.5 260.8V335.0M703.5 302.8V335.0M704.5 280.6V335.0M705.5 287.9V335.0M706.5 290.5V335.0M707.5 298.2V335.0M708.5 261.1V335.0M709.5 270.0V335.0M710.5 290.6V335.0M711.5 287.4V335.0M712.5 264.2V335.0M713.5 273.8V335.0M714.5 282.5V335.0M715.5 275.9V335.0M716.5 282.9V335.0M717.5 268.4V335.0M718.5 278.5V335.0M719.5 307.2V335.0M720.5 285.9V335.0M721.5 303.1V335.0M722.5 298.1V335.0M723.5 295.2V335.0M724.5 266.2V335.0M725.5 312.1V335.0M726.5 263.1V335.0M727.5 295.7V335.0M728.5 292.5V335.0M729.5 294.5V335.0M730.5 300.0V335.0M731.5 295.5V335.0M732.5 267.1V335.0M733.5 271.4V335.0M734.5 268.6V335.0M735.5 271.7V335.0M736.5 279.3V335.0M737.5 275.4V335.0M738.5 282.7V335.0M739.5 248.5V335.0M740.5 288.6V335.0M741.5 263.3V335.0M742.5 281.5V335.0M743.5 289.9V335.0M744.5 293.1V335.0M745.5 265.9V335.0M746.5 276.6V335.0M747.5 276.3V335.0M748.5 318.0V335.0M749.5 296.2V335.0M750.5 274.3V335.0M751.5 310.8V335.0M752.5 279.4V335.0M753.5 275.9V335.0M754.5 253.7V335.0M755.5 258.7V335.0M756.5 283.8V335.0M757.5 312.4V335.0M758.5 312.3V335.0M759.5 291.4V335.0M760.5 273.4V335.0M761.5 274.7V335.0M762.5 260.5V335.0M763.5 296.7V335.0M764.5 310.6V335.0M765.5 306.1V335.0M766.5 287.5V335.0M767.5 292.3V335.0M768.5 266.6V335.0M769.5 290.0V335.0M770.5 274.2V335.0M771.5 284.3V335.0M772.5 299.1V335.0M773.5 302.0V335.0M774.5 296.7V335.0M775.5 304.5V335.0M776.5 285.9V335.0M777.5 279.7V335.0M778.5 256.7V335.0M779.5 262.0V335.0M780.5 289.8V335.0M781.5 283.1V335.0M782.5 297.7V335.0M783.5 278.8V335.0M784.5 307.1V335.0M785.5 292.4V335.0M786.5 290.6V335.0M787.5 263.5V335.0M788.5 280.7V335.0M789.5 312.4V335.0M790.5 292.5V335.0M791.5 287.7V335.0M792.5 275.3V335.0M793.5 281.7V335.0M794.5 305.7V335.0M795.5 283.7V335.0M796.5 268.0V335.0M797.5 293.6V335.0M798.5 285.4V335.0M799.5 261.3V335.0M800.5 318.5V335.0M801.5 275.9V335.0M802.5 305.4V335.0M803.5 285.2V335.0M804.5 308.1V335.0M805.5 316.1V335.0M806.5 301.1V335.0M807.5 281.5V335.0M808.5 291.3V335.0M809.5 289.9V335.0M810.5 299.1V335.0M811.5 304.5V335.0M812.5 273.8V335.0M813.5 314.5V335.0M814.5 293.6V335.0M815.5 311.7V335.0M816.5 303.8V335.0M817.5 313.0V335.0M818.5 307.3V335.0M819.5 314.2V335.0M820.5 291.2V335.0M821.5 291.3V335.0M822.5 292.5V335.0M823.5 323.1V335.0M824.5 311.0V335.0M825.5 290.4V335.0M826.5 319.4V335.0M827.5 300.7V335.0M828.5 284.7V335.0M829.5 318.8V335.0M830.5 306.2V335.0M831.5 323.1V335.0M832.5 293.1V335.0M833.5 302.3V335.0M834.5 300.9V335.0M835.5 305.7V335.0M836.5 292.3V335.0M837.5 297.0V335.0M838.5 289.2V335.0M839.5 291.4V335.0M840.5 307.2V335.0M841.5 296.2V335.0M842.5 292.5V335.0M843.5 296.9V335.0M844.5 310.6V335.0M845.5 310.1V335.0M846.5 302.5V335.0M847.5 302.7V335.0M848.5 299.8V335.0M849.5 299.2V335.0M850.5 288.5V335.0M851.5 300.4V335.0M852.5 305.0V335.0M853.5 299.4V335.0M854.5 315.2V335.0M855.5 308.8V335.0M856.5 304.2V335.0M857.5 310.5V335.0M858.5 302.8V335.0M859.5 296.0V335.0M860.5 288.9V335.0M861.5 319.3V335.0M862.5 306.6V335.0M863.5 317.3V335.0M864.5 307.3V335.0M865.5 305.0V335.0M866.5 300.3V335.0M867.5 314.3V335.0M868.5 309.9V335.0M869.5 307.9V335.0M870.5 285.6V335.0M871.5 294.4V335.0M872.5 297.1V335.0M873.5 318.1V335.0M874.5 314.0V335.0M875.5 297.6V335.0M876.5 308.1V335.0M877.5 316.8V335.0M878.5 311.1V335.0M879.5 298.8V335.0" stroke="#8784a6" stroke-width="1"/>
<path d="M238.5 318.9V335.0M239.5 321.9V335.0M240.5 270.4V335.0M241.5 272.9V335.0M242.5 324.4V335.0M243.5 309.8V335.0M244.5 323.7V335.0M245.5 294.0V335.0M246.5 294.2V335.0M247.5 286.5V335.0M248.5 314.1V335.0M249.5 298.6V335.0M250.5 298.8V335.0M251.5 294.1V335.0M252.5 239.4V335.0M253.5 320.8V335.0M254.5 261.7V335.0M255.5 316.4V335.0M256.5 267.8V335.0M257.5 252.5V335.0M258.5 289.4V335.0M259.5 301.7V335.0M260.5 309.5V335.0M261.5 238.3V335.0M262.5 250.9V335.0M263.5 258.2V335.0M264.5 260.4V335.0M265.5 271.8V335.0M266.5 261.5V335.0M267.5 290.0V335.0M268.5 287.4V335.0M269.5 245.4V335.0M270.5 303.3V335.0M271.5 308.0V335.0M272.5 268.5V335.0M273.5 311.6V335.0M274.5 273.5V335.0M275.5 260.7V335.0M276.5 257.5V335.0M277.5 282.6V335.0M278.5 254.7V335.0M279.5 313.3V335.0M280.5 304.5V335.0M281.5 261.3V335.0M282.5 260.5V335.0M283.5 288.4V335.0M284.5 265.7V335.0M285.5 306.3V335.0M286.5 250.2V335.0M287.5 302.2V335.0M288.5 324.4V335.0M289.5 314.0V335.0M290.5 297.3V335.0M291.5 317.9V335.0M292.5 285.4V335.0M293.5 296.4V335.0M294.5 274.8V335.0M295.5 286.3V335.0M296.5 288.2V335.0M297.5 273.7V335.0M298.5 308.2V335.0M299.5 321.2V335.0M300.5 302.1V335.0M301.5 297.3V335.0M302.5 287.3V335.0M303.5 311.5V335.0M304.5 264.3V335.0M305.5 288.5V335.0M306.5 284.9V335.0M307.5 322.4V335.0M308.5 271.9V335.0M309.5 311.9V335.0M310.5 318.4V335.0M311.5 276.3V335.0M312.5 324.4V335.0M313.5 265.3V335.0M314.5 321.8V335.0M315.5 316.6V335.0M316.5 292.9V335.0M317.5 324.4V335.0M318.5 317.2V335.0M319.5 317.1V335.0M320.5 261.7V335.0M321.5 324.4V335.0M322.5 265.7V335.0M323.5 324.4V335.0M324.5 268.6V335.0M325.5 288.5V335.0M326.5 315.2V335.0M327.5 323.7V335.0M328.5 300.4V335.0M329.5 302.9V335.0M330.5 300.2V335.0M331.5 323.8V335.0M332.5 305.0V335.0M333.5 298.1V335.0M334.5 324.4V335.0M335.5 249.0V335.0M336.5 308.9V335.0M337.5 283.2V335.0M338.5 324.4V335.0M339.5 290.8V335.0M340.5 324.4V335.0M341.5 324.1V335.0M342.5 316.8V335.0M343.5 324.4V335.0M344.5 324.4V335.0M345.5 316.9V335.0M346.5 312.2V335.0M347.5 324.4V335.0M348.5 312.4V335.0M349.5 281.2V335.0M350.5 324.4V335.0M351.5 323.0V335.0M352.5 304.7V335.0M353.5 295.8V335.0M354.5 320.0V335.0M355.5 287.5V335.0M356.5 307.9V335.0M357.5 297.2V335.0M358.5 266.5V335.0M359.5 299.6V335.0M360.5 324.4V335.0M361.5 288.9V335.0M362.5 310.1V335.0M363.5 244.3V335.0M364.5 323.6V335.0M365.5 291.8V335.0M366.5 300.9V335.0M367.5 288.8V335.0M368.5 312.6V335.0M369.5 301.3V335.0M370.5 280.3V335.0M371.5 324.4V335.0M372.5 282.3V335.0M373.5 311.4V335.0M374.5 296.0V335.0M375.5 303.6V335.0M376.5 302.5V335.0M377.5 314.4V335.0M378.5 317.8V335.0M379.5 280.2V335.0M380.5 309.2V335.0M381.5 308.5V335.0M382.5 272.1V335.0M383.5 314.6V335.0M384.5 288.1V335.0M385.5 296.5V335.0M386.5 319.7V335.0M387.5 285.4V335.0M388.5 320.2V335.0M389.5 321.9V335.0M390.5 324.4V335.0M391.5 280.8V335.0M392.5 304.9V335.0M393.5 309.9V335.0M394.5 264.2V335.0M395.5 273.9V335.0M396.5 324.4V335.0M397.5 268.5V335.0M398.5 316.1V335.0M399.5 254.6V335.0M400.5 273.4V335.0M401.5 324.4V335.0M402.5 305.0V335.0M403.5 288.0V335.0M404.5 323.2V335.0M405.5 255.3V335.0M406.5 306.9V335.0M407.5 317.3V335.0M408.5 321.4V335.0M409.5 324.4V335.0M410.5 324.4V335.0M411.5 303.5V335.0M412.5 281.9V335.0M413.5 299.3V335.0M414.5 319.1V335.0M415.5 322.3V335.0M416.5 322.1V335.0M417.5 320.2V335.0M418.5 305.7V335.0M419.5 308.5V335.0M420.5 278.4V335.0M421.5 289.3V335.0M422.5 270.9V335.0M423.5 317.0V335.0M424.5 279.9V335.0M425.5 297.2V335.0M426.5 310.8V335.0M427.5 303.6V335.0M428.5 294.3V335.0M429.5 298.6V335.0M430.5 324.4V335.0M431.5 294.5V335.0M432.5 306.5V335.0M433.5 319.4V335.0M434.5 321.7V335.0M435.5 324.4V335.0M436.5 324.4V335.0M437.5 283.9V335.0M438.5 318.5V335.0M439.5 317.2V335.0M440.5 305.9V335.0M441.5 245.9V335.0M442.5 306.6V335.0M443.5 324.4V335.0M444.5 273.3V335.0M445.5 314.5V335.0M446.5 299.4V335.0M447.5 316.3V335.0M448.5 317.4V335.0M449.5 247.4V335.0M450.5 300.0V335.0M451.5 273.8V335.0M452.5 275.3V335.0M453.5 324.4V335.0M454.5 316.2V335.0M455.5 324.4V335.0M456.5 285.9V335.0M457.5 307.0V335.0M458.5 306.3V335.0M459.5 321.1V335.0M460.5 249.9V335.0M461.5 306.4V335.0M462.5 322.5V335.0M463.5 324.4V335.0M464.5 315.0V335.0M465.5 270.2V335.0M466.5 317.9V335.0M467.5 318.4V335.0M468.5 324.4V335.0M469.5 285.7V335.0M470.5 303.2V335.0M471.5 312.0V335.0M472.5 299.6V335.0M473.5 324.4V335.0M474.5 271.0V335.0M475.5 273.2V335.0M476.5 276.4V335.0M477.5 324.4V335.0M478.5 274.2V335.0M479.5 290.0V335.0M480.5 293.4V335.0M481.5 324.4V335.0M482.5 309.0V335.0M483.5 324.4V335.0M484.5 301.8V335.0M485.5 243.3V335.0M486.5 286.3V335.0M487.5 323.5V335.0M488.5 272.9V335.0M489.5 320.3V335.0M490.5 282.6V335.0M491.5 285.6V335.0M492.5 299.7V335.0M493.5 322.7V335.0M494.5 304.3V335.0M495.5 300.6V335.0M496.5 299.5V335.0M497.5 320.6V335.0M498.5 277.5V335.0M499.5 261.1V335.0M500.5 301.1V335.0M501.5 281.8V335.0M502.5 259.0V335.0M503.5 294.8V335.0M504.5 284.5V335.0M505.5 304.8V335.0M506.5 306.0V335.0M507.5 302.9V335.0M508.5 256.5V335.0M509.5 314.1V335.0M510.5 300.8V335.0M511.5 309.9V335.0M512.5 254.8V335.0M513.5 317.1V335.0M514.5 310.5V335.0M515.5 324.4V335.0M516.5 321.8V335.0M517.5 312.4V335.0M518.5 295.2V335.0M519.5 319.6V335.0M520.5 291.2V335.0M521.5 320.6V335.0M522.5 317.0V335.0M523.5 278.1V335.0M524.5 319.6V335.0M525.5 321.5V335.0M526.5 316.2V335.0M527.5 308.8V335.0M528.5 324.4V335.0M529.5 324.4V335.0M530.5 317.5V335.0M531.5 314.4V335.0M532.5 294.3V335.0M533.5 314.7V335.0M534.5 324.4V335.0M535.5 260.9V335.0M536.5 270.2V335.0M537.5 315.5V335.0M538.5 324.1V335.0M539.5 316.9V335.0M540.5 324.4V335.0M541.5 319.1V335.0M542.5 276.9V335.0M543.5 296.1V335.0M544.5 302.4V335.0M545.5 321.2V335.0M546.5 273.7V335.0M547.5 324.4V335.0M548.5 301.6V335.0M549.5 304.7V335.0M550.5 317.9V335.0M551.5 267.2V335.0M552.5 306.0V335.0M553.5 313.3V335.0M554.5 270.8V335.0M555.5 274.8V335.0M556.5 283.7V335.0M557.5 285.7V335.0M558.5 273.8V335.0M559.5 324.4V335.0M560.5 324.4V335.0M561.5 301.8V335.0M562.5 294.4V335.0M563.5 306.1V335.0M564.5 312.7V335.0M565.5 285.7V335.0M566.5 276.3V335.0M567.5 315.4V335.0M568.5 324.4V335.0M569.5 324.4V335.0M570.5 324.4V335.0M571.5 311.5V335.0M572.5 292.3V335.0M573.5 324.4V335.0M574.5 317.4V335.0M575.5 316.3V335.0M576.5 273.1V335.0M577.5 302.7V335.0M578.5 301.1V335.0M579.5 306.5V335.0M580.5 309.8V335.0M581.5 312.7V335.0M582.5 264.7V335.0M583.5 296.4V335.0M584.5 324.4V335.0M585.5 318.9V335.0M586.5 305.6V335.0M587.5 312.3V335.0M588.5 294.2V335.0M589.5 299.9V335.0M590.5 292.1V335.0M591.5 322.8V335.0M592.5 324.4V335.0M593.5 277.4V335.0M594.5 292.5V335.0M595.5 289.2V335.0M596.5 278.3V335.0M597.5 263.5V335.0M598.5 324.4V335.0M599.5 306.5V335.0M600.5 256.3V335.0M601.5 303.3V335.0M602.5 324.4V335.0M603.5 323.7V335.0M604.5 313.0V335.0M605.5 324.4V335.0M606.5 313.4V335.0M607.5 269.1V335.0M608.5 301.4V335.0M609.5 273.5V335.0M610.5 292.7V335.0M611.5 306.0V335.0M612.5 293.2V335.0M613.5 272.4V335.0M614.5 297.7V335.0M615.5 291.4V335.0M616.5 322.7V335.0M617.5 281.1V335.0M618.5 288.8V335.0M619.5 324.4V335.0M620.5 282.0V335.0M621.5 318.8V335.0M622.5 297.4V335.0M623.5 279.2V335.0M624.5 295.2V335.0M625.5 259.6V335.0M626.5 324.4V335.0M627.5 297.7V335.0M628.5 322.6V335.0M629.5 311.1V335.0M630.5 310.8V335.0M631.5 305.8V335.0M632.5 282.9V335.0M633.5 324.4V335.0M634.5 321.7V335.0M635.5 259.5V335.0M636.5 296.1V335.0M637.5 294.2V335.0M638.5 322.5V335.0M639.5 310.8V335.0M640.5 322.1V335.0M641.5 316.9V335.0M642.5 297.0V335.0M643.5 323.7V335.0M644.5 306.4V335.0M645.5 309.9V335.0M646.5 305.5V335.0M647.5 310.7V335.0M648.5 297.2V335.0M649.5 291.9V335.0M650.5 293.1V335.0M651.5 316.2V335.0M652.5 281.5V335.0M653.5 300.3V335.0M654.5 324.2V335.0M655.5 298.8V335.0M656.5 302.4V335.0M657.5 292.4V335.0M658.5 310.6V335.0M659.5 323.5V335.0M660.5 322.2V335.0M661.5 271.8V335.0M662.5 276.8V335.0M663.5 306.1V335.0M664.5 316.5V335.0M665.5 309.6V335.0M666.5 301.4V335.0M667.5 309.6V335.0M668.5 318.9V335.0M669.5 294.9V335.0M670.5 292.7V335.0M671.5 317.1V335.0M672.5 302.6V335.0M673.5 305.4V335.0M674.5 256.0V335.0M675.5 279.3V335.0M676.5 274.5V335.0M677.5 269.4V335.0M678.5 293.6V335.0M679.5 295.5V335.0M680.5 290.3V335.0M681.5 313.7V335.0M682.5 270.6V335.0M683.5 288.6V335.0M684.5 308.0V335.0M685.5 324.4V335.0M686.5 306.2V335.0M687.5 292.8V335.0M688.5 324.4V335.0M689.5 267.3V335.0M690.5 270.4V335.0M691.5 318.1V335.0M692.5 322.1V335.0M693.5 276.7V335.0M694.5 238.1V335.0M695.5 258.8V335.0M696.5 320.7V335.0M697.5 247.3V335.0M698.5 290.0V335.0M699.5 267.0V335.0M700.5 253.5V335.0M701.5 291.6V335.0M702.5 304.5V335.0M703.5 323.0V335.0M704.5 307.7V335.0M705.5 297.8V335.0M706.5 290.9V335.0M707.5 299.8V335.0M708.5 265.8V335.0M709.5 285.5V335.0M710.5 324.4V335.0M711.5 288.0V335.0M712.5 264.9V335.0M713.5 275.1V335.0M714.5 324.4V335.0M715.5 297.8V335.0M716.5 284.0V335.0M717.5 268.9V335.0M718.5 307.4V335.0M719.5 324.4V335.0M720.5 322.1V335.0M721.5 316.0V335.0M722.5 303.4V335.0M723.5 313.7V335.0M724.5 302.1V335.0M725.5 321.5V335.0M726.5 264.6V335.0M727.5 311.1V335.0M728.5 299.7V335.0M729.5 323.4V335.0M730.5 324.4V335.0M731.5 306.0V335.0M732.5 268.7V335.0M733.5 292.3V335.0M734.5 285.1V335.0M735.5 305.2V335.0M736.5 323.4V335.0M737.5 293.2V335.0M738.5 285.9V335.0M739.5 254.3V335.0M740.5 321.0V335.0M741.5 281.5V335.0M742.5 304.3V335.0M743.5 296.4V335.0M744.5 310.5V335.0M745.5 283.7V335.0M746.5 302.0V335.0M747.5 310.6V335.0M748.5 324.4V335.0M749.5 297.1V335.0M750.5 295.9V335.0M751.5 324.4V335.0M752.5 279.8V335.0M753.5 302.5V335.0M754.5 257.1V335.0M755.5 263.4V335.0M756.5 324.4V335.0M757.5 320.9V335.0M758.5 324.4V335.0M759.5 324.4V335.0M760.5 308.6V335.0M761.5 291.6V335.0M762.5 284.7V335.0M763.5 311.8V335.0M764.5 324.4V335.0M765.5 313.5V335.0M766.5 299.3V335.0M767.5 320.7V335.0M768.5 318.6V335.0M769.5 294.2V335.0M770.5 291.9V335.0M771.5 299.4V335.0M772.5 320.2V335.0M773.5 324.4V335.0M774.5 298.5V335.0M775.5 324.4V335.0M776.5 290.4V335.0M777.5 311.9V335.0M778.5 278.5V335.0M779.5 282.9V335.0M780.5 319.1V335.0M781.5 315.6V335.0M782.5 317.9V335.0M783.5 315.6V335.0M784.5 322.8V335.0M785.5 311.2V335.0M786.5 293.2V335.0M787.5 275.7V335.0M788.5 284.6V335.0M789.5 324.4V335.0M790.5 313.5V335.0M791.5 298.7V335.0M792.5 291.2V335.0M793.5 293.7V335.0M794.5 322.8V335.0M795.5 291.3V335.0M796.5 304.0V335.0M797.5 324.4V335.0M798.5 314.4V335.0M799.5 268.2V335.0M800.5 324.4V335.0M801.5 300.0V335.0M802.5 323.7V335.0M803.5 316.2V335.0M804.5 321.7V335.0M805.5 324.4V335.0M806.5 324.4V335.0M807.5 304.4V335.0M808.5 324.4V335.0M809.5 308.7V335.0M810.5 324.4V335.0M811.5 321.4V335.0M812.5 298.6V335.0M813.5 324.4V335.0M814.5 316.8V335.0M815.5 324.4V335.0M816.5 318.6V335.0M817.5 324.2V335.0M818.5 324.4V335.0M819.5 324.4V335.0M820.5 308.9V335.0M821.5 309.2V335.0M822.5 309.5V335.0M823.5 324.4V335.0M824.5 324.2V335.0M825.5 310.4V335.0M826.5 324.4V335.0M827.5 324.4V335.0M828.5 305.7V335.0M829.5 324.4V335.0M830.5 324.4V335.0M831.5 324.4V335.0M832.5 310.7V335.0M833.5 315.9V335.0M834.5 319.6V335.0M835.5 324.4V335.0M836.5 324.4V335.0M837.5 324.4V335.0M838.5 310.2V335.0M839.5 309.4V335.0M840.5 319.7V335.0M841.5 323.1V335.0M842.5 323.9V335.0M843.5 318.5V335.0M844.5 324.4V335.0M845.5 324.4V335.0M846.5 323.6V335.0M847.5 324.4V335.0M848.5 320.0V335.0M849.5 316.9V335.0M850.5 309.0V335.0M851.5 315.8V335.0M852.5 322.8V335.0M853.5 320.7V335.0M854.5 324.4V335.0M855.5 319.5V335.0M856.5 324.4V335.0M857.5 324.4V335.0M858.5 324.4V335.0M859.5 316.8V335.0M860.5 324.4V335.0M861.5 324.4V335.0M862.5 324.4V335.0M863.5 324.4V335.0M864.5 321.9V335.0M865.5 324.0V335.0M866.5 323.8V335.0M867.5 324.4V335.0M868.5 323.4V335.0M869.5 324.4V335.0M870.5 315.3V335.0M871.5 324.4V335.0M872.5 324.4V335.0M873.5 324.4V335.0M874.5 324.4V335.0M875.5 322.6V335.0M876.5 324.4V335.0M877.5 324.4V335.0M878.5 323.7V335.0M879.5 324.4V335.0" stroke="#4d4a7b" stroke-opacity="0.92" stroke-width="1"/>
<line x1="238" y1="251.5" x2="880" y2="251.5" stroke="#f55459" stroke-width="1" stroke-dasharray="4 3"/>
<line x1="238" y1="265.7" x2="880" y2="265.7" stroke="#f5b000" stroke-width="1" stroke-dasharray="4 3"/>
<line x1="238" y1="307.5" x2="880" y2="307.5" stroke="#2ba185" stroke-width="1" stroke-dasharray="4 3"/>
<rect x="238" y="334" width="642" height="3" fill="#2ba185"/>
<rect x="795.25" y="208" width="1.5" height="127" fill="#f7c245"/>
<rect x="802.75" y="208" width="1.5" height="127" fill="#f57050"/>
<rect x="816.40" y="208" width="1.2" height="127" fill="#f7c245"/>
<rect x="818.90" y="208" width="1.2" height="127" fill="#f5b000"/>
<rect x="824.75" y="208" width="1.5" height="127" fill="#f56a4a"/>
<rect x="826.75" y="208" width="1.5" height="127" fill="#f8a8b0"/>
<rect x="830.85" y="208" width="1.3" height="127" fill="#f58a9a"/>
<rect x="833.75" y="208" width="1.5" height="127" fill="#f5a000"/>
<rect x="837.85" y="208" width="1.3" height="127" fill="#f5556a"/>
<rect x="841.90" y="208" width="1.2" height="127" fill="#f5b000"/>
<rect x="848.75" y="208" width="1.5" height="127" fill="#f8a0aa"/>
<rect x="852.25" y="208" width="1.5" height="127" fill="#f8a0aa"/>
<rect x="856.75" y="208" width="3.5" height="127" fill="#f9b8be"/>
<rect x="861.75" y="208" width="1.5" height="127" fill="#f5b000"/>
<rect x="867.75" y="208" width="1.5" height="127" fill="#f5b000"/>
<rect x="870.75" y="208" width="1.5" height="127" fill="#f78a96"/>
<text x="0" y="0" transform="translate(804.5 247) rotate(-90)" font-size="8" font-weight="bold" fill="#f5a000" font-family="Liberation Sans">1009307</text>
<text x="0" y="0" transform="translate(812.0 247) rotate(-90)" font-size="8" font-weight="bold" fill="#f26a5a" font-family="Liberation Sans">1009469</text>
<text x="0" y="0" transform="translate(825.5 247) rotate(-90)" font-size="8" font-weight="bold" fill="#f5a000" font-family="Liberation Sans">1009814</text>
<text x="0" y="0" transform="translate(834.0 247) rotate(-90)" font-size="8" font-weight="bold" fill="#f26a5a" font-family="Liberation Sans">1010034</text>
<text x="0" y="0" transform="translate(840.0 247) rotate(-90)" font-size="8" font-weight="bold" fill="#f26a5a" font-family="Liberation Sans">1010073</text>
<text x="0" y="0" transform="translate(843.0 247) rotate(-90)" font-size="8" font-weight="bold" fill="#f5a000" font-family="Liberation Sans">1010089</text>
<text x="0" y="0" transform="translate(847.0 247) rotate(-90)" font-size="8" font-weight="bold" fill="#f26a5a" font-family="Liberation Sans">1010114</text>
<text x="0" y="0" transform="translate(851.0 247) rotate(-90)" font-size="8" font-weight="bold" fill="#f5a000" font-family="Liberation Sans">1010132</text>
<text x="0" y="0" transform="translate(858.0 247) rotate(-90)" font-size="8" font-weight="bold" fill="#f26a5a" font-family="Liberation Sans">1010210</text>
<text x="0" y="0" transform="translate(861.5 247) rotate(-90)" font-size="8" font-weight="bold" fill="#f26a5a" font-family="Liberation Sans">1010255</text>
<text x="0" y="0" transform="translate(867.0 247) rotate(-90)" font-size="8" font-weight="bold" fill="#f26a5a" font-family="Liberation Sans">1010601</text>
<text x="0" y="0" transform="translate(871.0 247) rotate(-90)" font-size="8" font-weight="bold" fill="#f5a000" font-family="Liberation Sans">1011131</text>
<text x="0" y="0" transform="translate(877.0 247) rotate(-90)" font-size="8" font-weight="bold" fill="#f5a000" font-family="Liberation Sans">1011148</text>
<text x="0" y="0" transform="translate(880.0 247) rotate(-90)" font-size="8" font-weight="bold" fill="#f26a5a" font-family="Liberation Sans">1011219</text>
<line x1="382" y1="336" x2="382" y2="340" stroke="#80708f" stroke-width="1"/>
<line x1="567" y1="336" x2="567" y2="340" stroke="#80708f" stroke-width="1"/>
<line x1="752" y1="336" x2="752" y2="340" stroke="#80708f" stroke-width="1"/>
</svg>
<div class="t" style="left:218px;top:383.85px;font-size:11.4px;line-height:11.4px;color:#80708f;font-weight:700;">Summary</div>
<svg class="abs" style="left:287px;top:383px" width="14" height="14" viewBox="0 0 14 14" fill="none" stroke="#2ba185" stroke-width="1.3"><circle cx="7" cy="7" r="6"/><path d="M4 7.2l2 2 4-4.4"/></svg>
<div class="t" style="left:303.5px;top:383.77px;font-size:11.5px;line-height:11.5px;color:#80708f;font-weight:400;">99.49%</div>
<svg class="abs" style="left:353px;top:382px" width="14" height="14" viewBox="0 0 14 14" fill="none" stroke="#f5b000" stroke-width="1.3" stroke-linejoin="round"><path d="M7 1.5l6 11H1z"/><path d="M7 5.5v3.5M7 10.5v.6"/></svg>
<div class="t" style="left:369px;top:383.77px;font-size:11.5px;line-height:11.5px;color:#80708f;font-weight:400;">0.48%</div>
<svg class="abs" style="left:411px;top:382px" width="14" height="15" viewBox="0 0 14 15" fill="none" stroke="#f55459" stroke-width="1.3" stroke-linejoin="round"><path d="M7 1.5C9 4 12 6 12 9.5a5 5 0 0 1-10 0C2 7.5 3.5 6 4 5c.5 1.5 1 2 2 2.5C6 5 6.5 3 7 1.5z"/><path d="M5.5 11a1.5 1.5 0 0 0 3 0c0-1-.8-1.6-1.5-2.5"/></svg>
<div class="t" style="left:427px;top:383.77px;font-size:11.5px;line-height:11.5px;color:#80708f;font-weight:400;">0.03%</div>
<div class="abs btn" style="left:777px;top:376px;width:113px;height:26px"></div>
<div class="t" style="left:787.5px;top:383.98px;font-size:11.25px;line-height:11.25px;color:#3e3446;font-weight:700;">Open in Discover</div>
<div class="abs card" style="left:201px;top:423px;width:695px;height:154px;overflow:hidden"><div style="height:36px;background:#faf9fb;border-bottom:1px solid #e2dee6"></div></div>
<div class="t" style="left:214.5px;top:436.62px;font-size:9.9px;line-height:9.9px;color:#80708f;font-weight:700;letter-spacing:-0.35px;transform:scaleY(1.15);transform-origin:0 8.4px">ALERT</div>
<div class="t" style="left:290px;top:436.62px;font-size:9.9px;line-height:9.9px;color:#80708f;font-weight:700;letter-spacing:-0.35px;transform:scaleY(1.15);transform-origin:0 8.4px">REASON</div>
<div class="t" style="left:658px;top:436.62px;font-size:9.9px;line-height:9.9px;color:#80708f;font-weight:700;letter-spacing:-0.35px;transform:scaleY(1.15);transform-origin:0 8.4px">DURATION</div>
<div class="t" style="left:733px;top:436.62px;font-size:9.9px;line-height:9.9px;color:#80708f;font-weight:700;letter-spacing:-0.35px;transform:scaleY(1.15);transform-origin:0 8.4px">DATE TRIGGERED</div>
<div class="abs" style="left:202px;top:489.5px;width:695px;height:1px;background:#e2dee6"></div>
<div class="abs" style="left:201px;top:468.5px;width:7px;height:12px;border-radius:0 3px 3px 0;background:#f55459"></div>
<div class="t" style="left:214.5px;top:468.93px;font-size:11.3px;line-height:11.3px;color:#3d74db;font-weight:400;">#1011219</div>
<div class="t" style="left:290px;top:468.93px;font-size:11.3px;line-height:11.3px;color:#3e3446;font-weight:400;letter-spacing:0.33px">Largest Contentful Paint above 12000</div>
<div class="t" style="left:658px;top:468.93px;font-size:11.3px;line-height:11.3px;color:#3e3446;font-weight:400;">39s</div>
<div class="t" style="left:733px;top:468.85px;font-size:11.4px;line-height:11.4px;color:#80708f;font-weight:400;">Jul 26, 2023 2:19:59 PM UTC</div>
<div class="abs" style="left:202px;top:519.5px;width:695px;height:1px;background:#e2dee6"></div>
<div class="abs" style="left:201px;top:498.5px;width:7px;height:12px;border-radius:0 3px 3px 0;background:#f5b000"></div>
<div class="t" style="left:214.5px;top:498.93px;font-size:11.3px;line-height:11.3px;color:#3d74db;font-weight:400;">#1011148</div>
<div class="t" style="left:290px;top:498.93px;font-size:11.3px;line-height:11.3px;color:#3e3446;font-weight:400;letter-spacing:0.33px">Largest Contentful Paint above 10000</div>
<div class="t" style="left:658px;top:498.93px;font-size:11.3px;line-height:11.3px;color:#3e3446;font-weight:400;">43s</div>
<div class="t" style="left:733px;top:498.85px;font-size:11.4px;line-height:11.4px;color:#80708f;font-weight:400;">Jul 26, 2023 1:39:57 PM UTC</div>
<div class="abs" style="left:202px;top:549.5px;width:695px;height:1px;background:#e2dee6"></div>
<div class="abs" style="left:201px;top:528.5px;width:7px;height:12px;border-radius:0 3px 3px 0;background:#f5b000"></div>
<div class="t" style="left:214.5px;top:528.93px;font-size:11.3px;line-height:11.3px;color:#3d74db;font-weight:400;">#1011131</div>
<div class="t" style="left:290px;top:528.93px;font-size:11.3px;line-height:11.3px;color:#3e3446;font-weight:400;letter-spacing:0.33px">Largest Contentful Paint above 10000</div>
<div class="t" style="left:658px;top:528.93px;font-size:11.3px;line-height:11.3px;color:#3e3446;font-weight:400;">51s</div>
<div class="t" style="left:733px;top:528.85px;font-size:11.4px;line-height:11.4px;color:#80708f;font-weight:400;">Jul 26, 2023 1:27:51 PM UTC</div>
<svg class="abs" style="left:213px;top:559px" width="16" height="14" viewBox="0 0 16 14" fill="none" stroke="#80708f" stroke-width="1.2"><path d="M1 1.5h1M1 7h1M1 12.5h1M4.5 1.5H15M4.5 7H15M4.5 12.5H15"/></svg>
<div class="t" style="left:234px;top:559.18px;font-size:11.6px;line-height:11.6px;color:#80708f;font-weight:400;">Show 22 Hidden Alerts</div>
<svg class="abs" style="left:870px;top:559px" width="14" height="12" viewBox="0 0 14 12"><path d="M2 3.5l5 5 5-5" stroke="#80708f" stroke-width="1.3" fill="none"/></svg>
<div class="abs card" style="left:201px;top:592px;width:695px;height:140px;overflow:hidden"><div style="height:37px;background:#faf9fb;border-bottom:1px solid #e2dee6"></div></div>
<div class="t" style="left:215.5px;top:606.12px;font-size:9.9px;line-height:9.9px;color:#80708f;font-weight:700;letter-spacing:-0.35px;transform:scaleY(1.15);transform-origin:0 8.4px">TRANSACTIONS</div>
<div class="t" style="left:343px;top:606.12px;font-size:9.9px;line-height:9.9px;color:#80708f;font-weight:700;letter-spacing:-0.35px;transform:scaleY(1.15);transform-origin:0 8.4px">PROJECT</div>
<div class="t" style="left:468px;top:606.12px;font-size:9.9px;line-height:9.9px;color:#80708f;font-weight:700;width:200px;text-align:right;letter-spacing:-0.35px;transform:scaleY(1.15);transform-origin:0 8.4px">P75(MEASUREMENTS.LCP)</div>
<div class="t" style="left:566px;top:606.12px;font-size:9.9px;line-height:9.9px;color:#80708f;font-weight:700;width:200px;text-align:right;letter-spacing:-0.35px;transform:scaleY(1.15);transform-origin:0 8.4px">USERS</div>
<div class="t" style="left:794px;top:606.12px;font-size:9.9px;line-height:9.9px;color:#80708f;font-weight:700;letter-spacing:-0.35px;transform:scaleY(1.15);transform-origin:0 8.4px">USER MISERY</div>
<div class="abs" style="left:202px;top:663.0px;width:695px;height:1px;background:#ebe8ef"></div>
<svg class="abs" style="left:342px;top:640px" width="13" height="13" viewBox="0 0 22 22"><rect width="22" height="22" rx="3" fill="#58d3f7"/>
<g fill="none" stroke="#fff" stroke-width="0.9"><ellipse cx="11" cy="11" rx="8.5" ry="3.3"/><ellipse cx="11" cy="11" rx="8.5" ry="3.3" transform="rotate(60 11 11)"/><ellipse cx="11" cy="11" rx="8.5" ry="3.3" transform="rotate(120 11 11)"/></g><circle cx="11" cy="11" r="1.6" fill="#fff"/></svg>
<div class="t" style="left:218px;top:641.84px;font-size:12px;line-height:12px;color:#3d74db;font-weight:400;letter-spacing:0.2px">/products</div>
<div class="t" style="left:361.5px;top:641.84px;font-size:12px;line-height:12px;color:#3d74db;font-weight:400;letter-spacing:0.2px">frontend-javascript</div>
<div class="t" style="left:469px;top:642.01px;font-size:11.8px;line-height:11.8px;color:#3e3446;font-weight:400;width:200px;text-align:right">7.68s</div>
<div class="t" style="left:729px;top:642.01px;font-size:11.8px;line-height:11.8px;color:#3e3446;font-weight:400;">16k</div>
<svg class="abs" style="left:753px;top:639.5px" width="14" height="14" viewBox="0 0 14 14" fill="none" stroke="#3e3446" stroke-width="1.2"><circle cx="7" cy="4.5" r="3"/><path d="M2 12.5v-1a3 3 0 0 1 3-3h4a3 3 0 0 1 3 3v1z"/></svg>
<div class="abs" style="left:820.0px;top:639.0px;width:3px;height:16px;background:#444674"></div>
<div class="abs" style="left:826.5px;top:639.0px;width:3px;height:16px;background:#444674"></div>
<div class="abs" style="left:833.0px;top:639.0px;width:3px;height:16px;background:#444674"></div>
<div class="abs" style="left:839.5px;top:639.0px;width:3px;height:16px;background:#444674"></div>
<div class="abs" style="left:846.0px;top:639.0px;width:3px;height:16px;background:#444674"></div>
<div class="abs" style="left:852.5px;top:639.0px;width:3px;height:16px;background:#444674"></div>
<div class="abs" style="left:859.0px;top:639.0px;width:3px;height:16px;background:#444674"></div>
<div class="abs" style="left:865.5px;top:639.0px;width:3px;height:16px;background:#444674"></div>
<div class="abs" style="left:872.0px;top:639.0px;width:3px;height:16px;background:#444674"></div>
<div class="abs" style="left:878.5px;top:639.0px;width:3px;height:16px;background:#444674"></div>
<div class="abs" style="left:202px;top:696.7px;width:695px;height:1px;background:#ebe8ef"></div>
<svg class="abs" style="left:342px;top:674px" width="13" height="13" viewBox="0 0 22 22"><rect width="22" height="22" rx="3" fill="#58d3f7"/>
<g fill="none" stroke="#fff" stroke-width="0.9"><ellipse cx="11" cy="11" rx="8.5" ry="3.3"/><ellipse cx="11" cy="11" rx="8.5" ry="3.3" transform="rotate(60 11 11)"/><ellipse cx="11" cy="11" rx="8.5" ry="3.3" transform="rotate(120 11 11)"/></g><circle cx="11" cy="11" r="1.6" fill="#fff"/></svg>
<div class="t" style="left:218px;top:675.54px;font-size:12px;line-height:12px;color:#3d74db;font-weight:400;letter-spacing:0.2px">/products-join</div>
<div class="t" style="left:361.5px;top:675.54px;font-size:12px;line-height:12px;color:#3d74db;font-weight:400;letter-spacing:0.2px">frontend-javascript</div>
<div class="t" style="left:469px;top:675.71px;font-size:11.8px;line-height:11.8px;color:#3e3446;font-weight:400;width:200px;text-align:right">1.21s</div>
<div class="t" style="left:729px;top:675.71px;font-size:11.8px;line-height:11.8px;color:#3e3446;font-weight:400;">16k</div>
<svg class="abs" style="left:753px;top:673.2px" width="14" height="14" viewBox="0 0 14 14" fill="none" stroke="#3e3446" stroke-width="1.2"><circle cx="7" cy="4.5" r="3"/><path d="M2 12.5v-1a3 3 0 0 1 3-3h4a3 3 0 0 1 3 3v1z"/></svg>
<div class="abs" style="left:820.0px;top:672.7px;width:3px;height:16px;background:#444674"></div>
<div class="abs" style="left:826.5px;top:672.7px;width:3px;height:16px;background:#444674"></div>
<div class="abs" style="left:833.0px;top:672.7px;width:3px;height:16px;background:#444674"></div>
<div class="abs" style="left:839.5px;top:672.7px;width:3px;height:16px;background:#444674"></div>
<div class="abs" style="left:846.0px;top:672.7px;width:3px;height:16px;background:#444674"></div>
<div class="abs" style="left:852.5px;top:672.7px;width:3px;height:16px;background:#444674"></div>
<div class="abs" style="left:859.0px;top:672.7px;width:3px;height:16px;background:#444674"></div>
<div class="abs" style="left:865.5px;top:672.7px;width:3px;height:16px;background:#444674"></div>
<div class="abs" style="left:872.0px;top:672.7px;width:3px;height:16px;background:#e0dce5"></div>
<div class="abs" style="left:878.5px;top:672.7px;width:3px;height:16px;background:#e0dce5"></div>
<div class="abs" style="left:202px;top:730.4px;width:695px;height:1px;background:#ebe8ef"></div>
<svg class="abs" style="left:342px;top:707px" width="13" height="13" viewBox="0 0 22 22"><rect width="22" height="22" rx="3" fill="#58d3f7"/>
<g fill="none" stroke="#fff" stroke-width="0.9"><ellipse cx="11" cy="11" rx="8.5" ry="3.3"/><ellipse cx="11" cy="11" rx="8.5" ry="3.3" transform="rotate(60 11 11)"/><ellipse cx="11" cy="11" rx="8.5" ry="3.3" transform="rotate(120 11 11)"/></g><circle cx="11" cy="11" r="1.6" fill="#fff"/></svg>
<div class="abs" style="left:820.0px;top:706.4px;width:3px;height:16px;background:#444674"></div>
<div class="abs" style="left:826.5px;top:706.4px;width:3px;height:16px;background:#444674"></div>
<div class="abs" style="left:833.0px;top:706.4px;width:3px;height:16px;background:#444674"></div>
<div class="abs" style="left:839.5px;top:706.4px;width:3px;height:16px;background:#444674"></div>
<div class="abs" style="left:846.0px;top:706.4px;width:3px;height:16px;background:#e0dce5"></div>
<div class="abs" style="left:852.5px;top:706.4px;width:3px;height:16px;background:#e0dce5"></div>
<div class="abs" style="left:859.0px;top:706.4px;width:3px;height:16px;background:#e0dce5"></div>
<div class="abs" style="left:865.5px;top:706.4px;width:3px;height:16px;background:#e0dce5"></div>
<div class="abs" style="left:872.0px;top:706.4px;width:3px;height:16px;background:#e0dce5"></div>
<div class="abs" style="left:878.5px;top:706.4px;width:3px;height:16px;background:#e0dce5"></div>
<div class="t" style="left:914px;top:102.90px;font-size:11.7px;line-height:11.7px;color:#80708f;font-weight:700;">Alert Status</div>
<div class="t" style="left:1046.5px;top:103.85px;font-size:11.4px;line-height:11.4px;color:#80708f;font-weight:700;">Last Triggered</div>
<svg class="abs" style="left:913px;top:118px" width="31" height="31" viewBox="0 0 31 31"><rect x="4.5" y="4.5" width="22" height="22" rx="2.5" transform="rotate(45 15.5 15.5)" fill="#2a9d7f"/><path d="M10.3 16l3.6 3.6 6.6-8" stroke="#fff" stroke-width="1.3" fill="none"/></svg>
<div class="t" style="left:950px;top:127.08px;font-size:12.9px;line-height:12.9px;color:#3e3446;font-weight:400;">Resolved</div>
<div class="t" style="left:1046.5px;top:126.74px;font-size:13.3px;line-height:13.3px;color:#3e3446;font-weight:400;text-decoration:underline dotted #a89fb3;text-underline-offset:1.5px">2 hours ago</div>
<div class="abs" style="left:915px;top:181.5px;width:7px;height:7px;background:#e5393c;transform:rotate(45deg)"></div><div class="t" style="left:930.5px;top:180.35px;font-size:11.4px;line-height:11.4px;color:#80708f;font-weight:700;">Critical Conditions</div>
<div class="t" style="left:914.5px;top:206.94px;font-size:10.7px;line-height:10.7px;color:#80708f;font-weight:700;">When</div>
<div class="abs" style="left:946.5px;top:202px;width:232px;height:30px;border-radius:5px;background:#f8f7fa"></div>
<div class="t" style="left:951.5px;top:205.45px;font-size:10.1px;line-height:10.1px;color:#3e3446;font-weight:400;">Largest Contentful Paint is above 12000 in 1</div>
<div class="t" style="left:951.5px;top:218.15px;font-size:10.1px;line-height:10.1px;color:#3e3446;font-weight:400;">minute</div>
<div class="t" style="left:914.5px;top:243.64px;font-size:10.7px;line-height:10.7px;color:#80708f;font-weight:700;">Then</div>
<div class="abs" style="left:946.5px;top:239px;width:232px;height:30px;border-radius:5px;background:#f8f7fa"></div>
<div class="t" style="left:951.5px;top:241.65px;font-size:10.1px;line-height:10.1px;color:#3e3446;font-weight:400;">Send a Slack notification to #sentry-metric-</div>
<div class="t" style="left:951.5px;top:254.45px;font-size:10.1px;line-height:10.1px;color:#3e3446;font-weight:400;">alerts</div>
<div class="abs" style="left:946.5px;top:271.5px;width:232px;height:17px;border-radius:5px;background:#f8f7fa"></div>
<div class="t" style="left:951.5px;top:274.45px;font-size:10.1px;line-height:10.1px;color:#3e3446;font-weight:400;">Change alert status to Critical</div>
<div class="abs" style="left:915px;top:318.5px;width:7px;height:7px;background:#f5b000;transform:rotate(45deg)"></div><div class="t" style="left:930.5px;top:317.35px;font-size:11.4px;line-height:11.4px;color:#80708f;font-weight:700;">Warning Conditions</div>
<div class="t" style="left:914.5px;top:343.74px;font-size:10.7px;line-height:10.7px;color:#80708f;font-weight:700;">When</div>
<div class="abs" style="left:946.5px;top:339px;width:232px;height:30px;border-radius:5px;background:#f8f7fa"></div>
<div class="t" style="left:951.5px;top:342.45px;font-size:10.1px;line-height:10.1px;color:#3e3446;font-weight:400;">Largest Contentful Paint is above 10000 in 1</div>
<div class="t" style="left:951.5px;top:355.15px;font-size:10.1px;line-height:10.1px;color:#3e3446;font-weight:400;">minute</div>
<div class="t" style="left:914.5px;top:379.94px;font-size:10.7px;line-height:10.7px;color:#80708f;font-weight:700;">Then</div>
<div class="abs" style="left:946.5px;top:377px;width:232px;height:17px;border-radius:5px;background:#f8f7fa"></div>
<div class="t" style="left:951.5px;top:379.95px;font-size:10.1px;line-height:10.1px;color:#3e3446;font-weight:400;">Change alert status to Warning</div>
<div class="abs" style="left:915px;top:425.5px;width:7px;height:7px;background:#2ba185;transform:rotate(45deg)"></div><div class="t" style="left:930.5px;top:424.35px;font-size:11.4px;line-height:11.4px;color:#80708f;font-weight:700;">Resolved Conditions</div>
<div class="t" style="left:914.5px;top:450.44px;font-size:10.7px;line-height:10.7px;color:#80708f;font-weight:700;">When</div>
<div class="abs" style="left:946.5px;top:446px;width:232px;height:30px;border-radius:5px;background:#f8f7fa"></div>
<div class="t" style="left:951.5px;top:448.95px;font-size:10.1px;line-height:10.1px;color:#3e3446;font-weight:400;">Largest Contentful Paint is below 4000 in 1</div>
<div class="t" style="left:951.5px;top:461.95px;font-size:10.1px;line-height:10.1px;color:#3e3446;font-weight:400;">minute</div>
<div class="t" style="left:914.5px;top:487.44px;font-size:10.7px;line-height:10.7px;color:#80708f;font-weight:700;">Then</div>
<div class="abs" style="left:946.5px;top:484px;width:232px;height:17px;border-radius:5px;background:#f8f7fa"></div>
<div class="t" style="left:951.5px;top:486.95px;font-size:10.1px;line-height:10.1px;color:#3e3446;font-weight:400;">Change alert status to Resolved</div>
<div class="t" style="left:914px;top:533.35px;font-size:11.4px;line-height:11.4px;color:#80708f;font-weight:700;">Alert Rule Details</div>
<div class="abs" style="left:914px;top:553px;width:265px;height:22px;background:#faf9fb"></div>
<div class="t" style="left:920.5px;top:558.14px;font-size:12px;line-height:12px;color:#3e3446;font-weight:400;">Environment</div>
<div class="t" style="left:973px;top:558.40px;font-size:11.7px;line-height:11.7px;color:#80708f;font-weight:400;width:200px;text-align:right">-</div>
<div class="t" style="left:920.5px;top:580.14px;font-size:12px;line-height:12px;color:#3e3446;font-weight:400;">Date created</div>
<div class="t" style="left:973px;top:580.40px;font-size:11.7px;line-height:11.7px;color:#80708f;font-weight:400;width:200px;text-align:right">Jan 31, 2022</div>
<div class="abs" style="left:914px;top:597px;width:265px;height:22px;background:#faf9fb"></div>
<div class="t" style="left:920.5px;top:602.14px;font-size:12px;line-height:12px;color:#3e3446;font-weight:400;">Created By</div>
<div class="t" style="left:973px;top:602.40px;font-size:11.7px;line-height:11.7px;color:#80708f;font-weight:400;width:200px;text-align:right">katherine.lam@sentr…</div>
<div class="t" style="left:920.5px;top:624.14px;font-size:12px;line-height:12px;color:#3e3446;font-weight:400;">Last Modified</div>
<div class="t" style="left:973px;top:624.40px;font-size:11.7px;line-height:11.7px;color:#80708f;font-weight:400;width:200px;text-align:right;text-decoration:underline dotted #b0a8ba">a year ago</div>
<div class="abs" style="left:914px;top:641px;width:265px;height:27px;background:#faf9fb"></div>
<div class="t" style="left:920.5px;top:646.14px;font-size:12px;line-height:12px;color:#3e3446;font-weight:400;">Team</div>
<div class="abs" style="left:1153px;top:646px;width:19px;height:19px;border-radius:3px;background:#6c5fc7;color:#fff;font:10px/19px 'Liberation Sans', sans-serif;text-align:center">T</div>
<div class="abs" style="left:176px;top:600px;width:1024px;height:109px;background:radial-gradient(ellipse 620px 66px at 930px 135px,rgba(40,30,60,0.2),rgba(40,30,60,0.1) 50%,rgba(40,30,60,0) 100%)"></div>
</body></html>
